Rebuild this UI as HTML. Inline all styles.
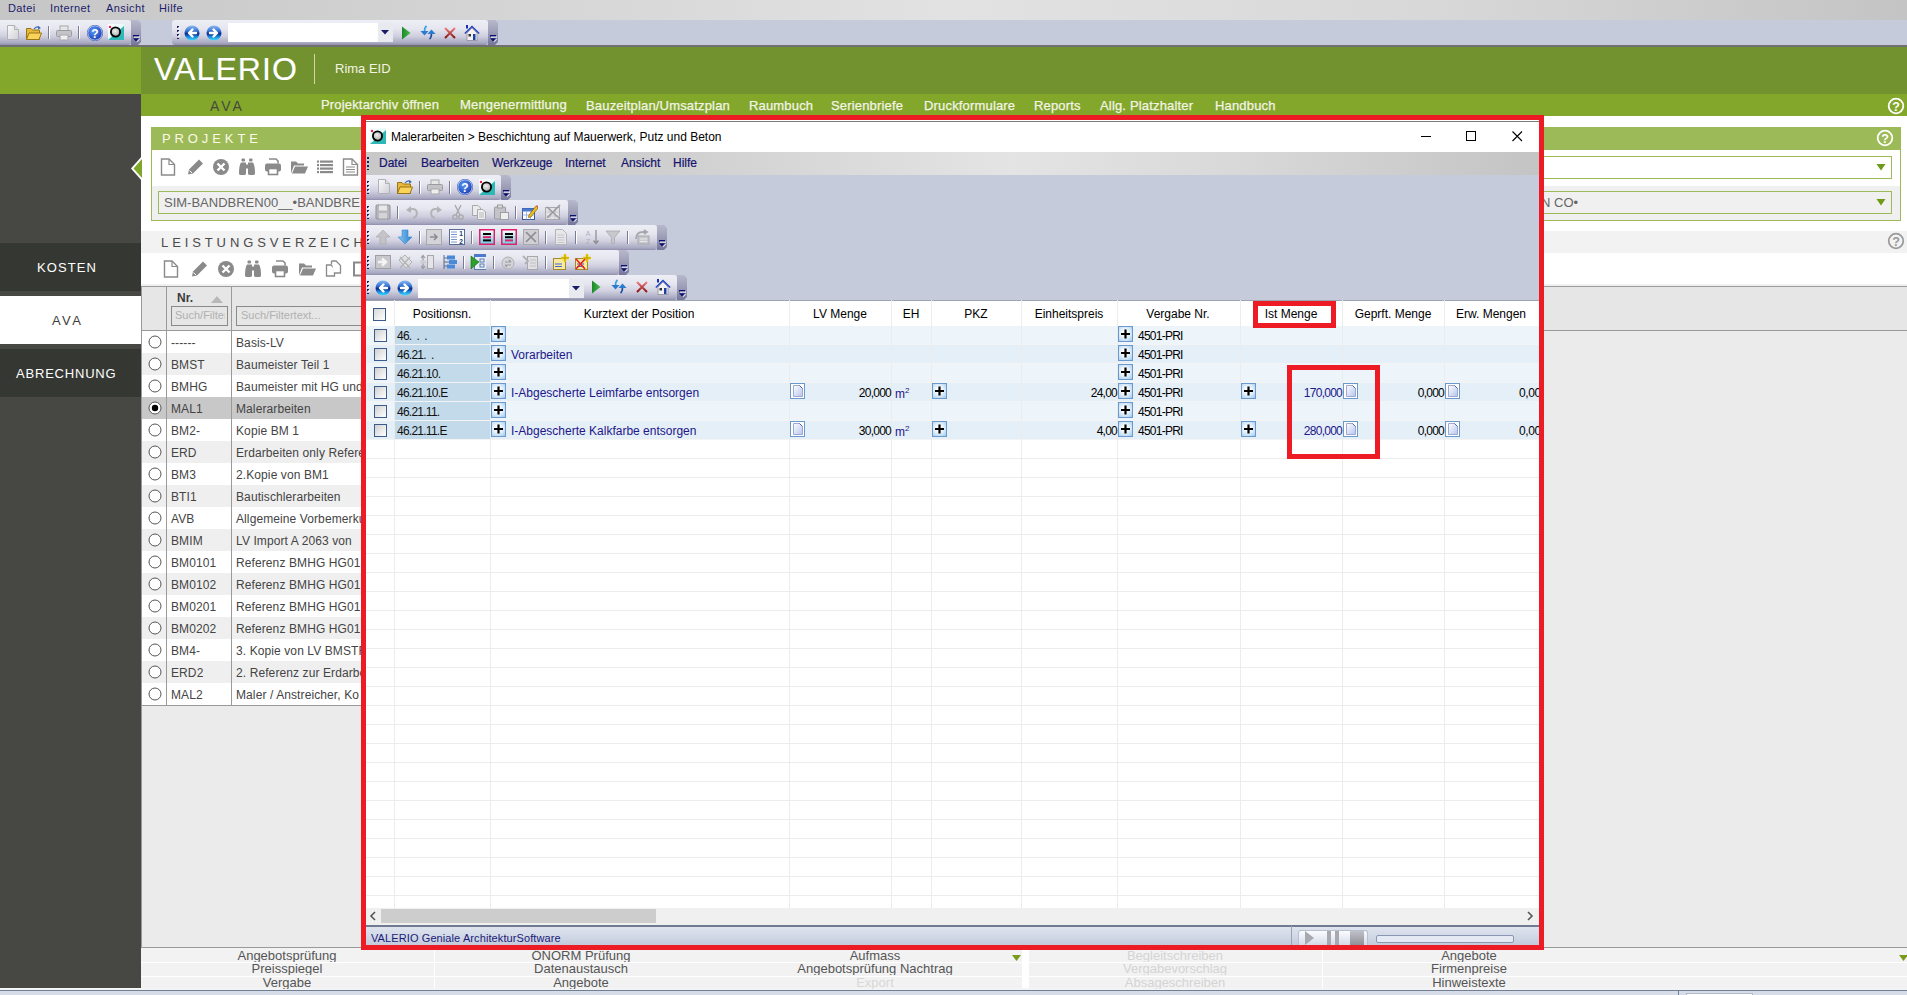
<!DOCTYPE html><html><head><meta charset="utf-8"><style>
html,body{margin:0;padding:0}
body{width:1907px;height:995px;overflow:hidden;position:relative;background:#e9e9e9;font-family:"Liberation Sans",sans-serif;}
.t{position:absolute;white-space:nowrap;line-height:1;}
div{box-sizing:border-box}
</style></head><body>
<div style="position:absolute;left:0px;top:0px;width:1907px;height:20px;background:linear-gradient(90deg,#c6c6c6 0%,#d4d4d4 25%,#e2e2e2 50%,#d8d8d8 75%,#c4c4c4 100%)"></div>
<div class="t" style="left:8px;top:3px;font-size:11px;color:#1c1c6c;letter-spacing:0.4px">Datei</div>
<div class="t" style="left:50px;top:3px;font-size:11px;color:#1c1c6c;letter-spacing:0.4px">Internet</div>
<div class="t" style="left:106px;top:3px;font-size:11px;color:#1c1c6c;letter-spacing:0.4px">Ansicht</div>
<div class="t" style="left:159px;top:3px;font-size:11px;color:#1c1c6c;letter-spacing:0.4px">Hilfe</div>
<div style="position:absolute;left:0px;top:20px;width:1907px;height:25px;background:#c5cbdb"></div>
<div style="position:absolute;left:0px;top:45px;width:1907px;height:2px;background:#707070"></div>
<div style="position:absolute;left:0px;top:20px;width:131px;height:25px;background:linear-gradient(#eeeef6 0%,#e6e6f0 35%,#cfcfdf 65%,#a8a8c2 92%,#8e8eac 100%);border-radius:0px 3px 3px 0px"></div>
<div style="position:absolute;left:131px;top:20px;width:10px;height:25px;background:linear-gradient(#b8b8cc,#9c9cb6 50%,#76769a);clip-path:polygon(0 0,70% 0,100% 12%,100% 88%,70% 100%,0 100%)"></div>
<svg style="position:absolute;left:132px;top:35px;" width="8" height="8" viewBox="0 0 8 8"><rect x="1" y="0" width="6" height="1.6" fill="#0a1070"/><rect x="2" y="1.6" width="6" height="1" fill="#fff"/><path d="M1 3.2 L7 3.2 L4 6.5 Z" fill="#0a1070"/><path d="M5 6.8 L7.5 4.2" stroke="#fff" stroke-width="1"/></svg>
<div style="position:absolute;left:172px;top:20px;width:316px;height:25px;background:linear-gradient(#eeeef6 0%,#e6e6f0 35%,#cfcfdf 65%,#a8a8c2 92%,#8e8eac 100%);border-radius:3px 3px 3px 3px"></div>
<div style="position:absolute;left:488px;top:20px;width:10px;height:25px;background:linear-gradient(#b8b8cc,#9c9cb6 50%,#76769a);clip-path:polygon(0 0,70% 0,100% 12%,100% 88%,70% 100%,0 100%)"></div>
<svg style="position:absolute;left:489px;top:35px;" width="8" height="8" viewBox="0 0 8 8"><rect x="1" y="0" width="6" height="1.6" fill="#0a1070"/><rect x="2" y="1.6" width="6" height="1" fill="#fff"/><path d="M1 3.2 L7 3.2 L4 6.5 Z" fill="#0a1070"/><path d="M5 6.8 L7.5 4.2" stroke="#fff" stroke-width="1"/></svg>
<svg style="position:absolute;left:176px;top:26px;" width="4" height="13" viewBox="0 0 4 13"><rect x="1" y="0" width="2" height="2" fill="#1a2060"/><rect x="2" y="1" width="2" height="2" fill="#fff" opacity="0.7"/><rect x="1" y="4" width="2" height="2" fill="#1a2060"/><rect x="2" y="5" width="2" height="2" fill="#fff" opacity="0.7"/><rect x="1" y="8" width="2" height="2" fill="#1a2060"/><rect x="2" y="9" width="2" height="2" fill="#fff" opacity="0.7"/><rect x="1" y="12" width="2" height="2" fill="#1a2060"/><rect x="2" y="13" width="2" height="2" fill="#fff" opacity="0.7"/></svg>
<svg style="position:absolute;left:5px;top:25px" width="16" height="16" viewBox="0 0 16 16"><defs><linearGradient id="gd" x1="0" y1="0" x2="1" y2="1"><stop offset="0" stop-color="#fbfbfb"/><stop offset="1" stop-color="#cfcfd6"/></linearGradient></defs><path d="M2.5 0.5 H9.5 L13.5 4.5 V14.5 H2.5 Z" fill="url(#gd)" stroke="#b0b0b8"/><path d="M9.5 0.5 V4.5 H13.5" fill="#e0e0e0" stroke="#b0b0b8"/></svg>
<svg style="position:absolute;left:26px;top:25px" width="16" height="16" viewBox="0 0 16 16"><path d="M0.5 3.5 H5 L6.5 5 H13.5 V14.5 H0.5Z" fill="#e8b838" stroke="#9a7418"/><path d="M0.5 14.5 L3 8 H15.5 L13 14.5Z" fill="#fad45a" stroke="#9a7418"/><path d="M8 4 Q10.5 0.5 13.5 2.5" fill="none" stroke="#3a6ab0" stroke-width="1.2"/><path d="M12 1 L15 3 L12 4.5Z" fill="#3a6ab0"/></svg>
<div style="position:absolute;left:48px;top:26px;width:1px;height:13px;background:#7a7a90"></div>
<div style="position:absolute;left:49px;top:26px;width:1px;height:13px;background:#fff"></div>
<svg style="position:absolute;left:56px;top:25px" width="16" height="16" viewBox="0 0 16 16"><rect x="4" y="1" width="8" height="5" fill="#e6e6e6" stroke="#a8a8a8"/><rect x="0.5" y="5.5" width="15" height="6" rx="1" fill="#c4c4c8" stroke="#9a9aa0"/><rect x="4" y="10" width="8" height="5" fill="#eeeeee" stroke="#a8a8a8"/></svg>
<div style="position:absolute;left:78px;top:26px;width:1px;height:13px;background:#7a7a90"></div>
<div style="position:absolute;left:79px;top:26px;width:1px;height:13px;background:#fff"></div>
<svg style="position:absolute;left:87px;top:25px" width="16" height="16" viewBox="0 0 16 16"><defs><radialGradient id="gh" cx="0.4" cy="0.35" r="0.7"><stop offset="0" stop-color="#5a9af8"/><stop offset="1" stop-color="#1a3ab0"/></radialGradient></defs><circle cx="8" cy="8" r="7.3" fill="url(#gh)" stroke="#cfe0ff" stroke-width="1"/><circle cx="8" cy="8" r="7.8" fill="none" stroke="#2a4aa8" stroke-width="0.6"/><text x="8" y="12.6" font-size="12" font-weight="bold" text-anchor="middle" fill="#fff" font-family="Liberation Sans">?</text></svg>
<svg style="position:absolute;left:108px;top:24px" width="16" height="16" viewBox="0 0 16 16"><defs><linearGradient id="gapp" x1="0" y1="0" x2="1" y2="1"><stop offset="0" stop-color="#ffffff"/><stop offset="1" stop-color="#d0f4f4"/></linearGradient><radialGradient id="gring" cx="0.45" cy="0.4" r="0.6"><stop offset="0" stop-color="#f0f0f0"/><stop offset="1" stop-color="#a8a8a8"/></radialGradient></defs><rect x="0" y="0" width="16" height="16" fill="url(#gapp)"/><path d="M0 16 L16 2 V16Z" fill="#2eb8b8"/><circle cx="7.5" cy="8" r="4.6" fill="url(#gring)" stroke="#000" stroke-width="1.8"/><circle cx="2" cy="3" r="1.2" fill="#e8204a"/></svg>
<svg style="position:absolute;left:184px;top:25px" width="16" height="16" viewBox="0 0 16 16"><defs><linearGradient id="gb" x1="0" y1="0" x2="0" y2="1"><stop offset="0" stop-color="#8ab8f0"/><stop offset="0.35" stop-color="#3a78d8"/><stop offset="0.55" stop-color="#0a2a8a"/><stop offset="0.75" stop-color="#1a8ae0"/><stop offset="1" stop-color="#40e0ff"/></linearGradient></defs><circle cx="8" cy="8" r="7.5" fill="url(#gb)"/><path d="M12 8 H5.5 M8.5 4.5 L5 8 L8.5 11.5" fill="none" stroke="#fff" stroke-width="2.4" stroke-linecap="round" stroke-linejoin="round"/></svg>
<svg style="position:absolute;left:206px;top:25px" width="16" height="16" viewBox="0 0 16 16"><defs><linearGradient id="gb" x1="0" y1="0" x2="0" y2="1"><stop offset="0" stop-color="#8ab8f0"/><stop offset="0.35" stop-color="#3a78d8"/><stop offset="0.55" stop-color="#0a2a8a"/><stop offset="0.75" stop-color="#1a8ae0"/><stop offset="1" stop-color="#40e0ff"/></linearGradient></defs><circle cx="8" cy="8" r="7.5" fill="url(#gb)"/><path d="M4 8 H10.5 M7.5 4.5 L11 8 L7.5 11.5" fill="none" stroke="#fff" stroke-width="2.4" stroke-linecap="round" stroke-linejoin="round"/></svg>
<div style="position:absolute;left:228px;top:23px;width:165px;height:19px;background:#fff"></div>
<div style="position:absolute;left:378px;top:23px;width:15px;height:19px;background:#e8eaf0"></div>
<svg style="position:absolute;left:381px;top:30px;" width="8" height="5" viewBox="0 0 8 5"><path d="M0 0 H8 L4 4.5Z" fill="#1a1a6a"/></svg>
<svg style="position:absolute;left:398px;top:25px" width="16" height="16" viewBox="0 0 16 16"><defs><linearGradient id="gpl" x1="0" y1="0" x2="1" y2="0"><stop offset="0" stop-color="#1a8a2a"/><stop offset="1" stop-color="#4ab84a"/></linearGradient></defs><path d="M4 1.5 L12.5 8 L4 14.5Z" fill="url(#gpl)"/></svg>
<svg style="position:absolute;left:420px;top:25px" width="16" height="16" viewBox="0 0 16 16"><path d="M6.5 1 Q4.5 2.5 4.5 6.5" fill="none" stroke="#30a0e0" stroke-width="1.6"/><path d="M0.5 6 H8.5 L4.5 10.5Z" fill="#2a7ad0"/><path d="M11.5 8.5 Q11.5 12.5 9.5 14" fill="none" stroke="#1a4a9a" stroke-width="1.6"/><path d="M7.5 9 H15.5 L11.5 4.5Z" fill="#2a7ad0"/></svg>
<svg style="position:absolute;left:442px;top:25px" width="16" height="16" viewBox="0 0 16 16"><defs><linearGradient id="gx" x1="0" y1="0" x2="0" y2="1"><stop offset="0" stop-color="#f08080"/><stop offset="1" stop-color="#8a1010"/></linearGradient></defs><path d="M3 3 L13 13 M13 3 L3 13" stroke="url(#gx)" stroke-width="2"/></svg>
<svg style="position:absolute;left:464px;top:25px" width="16" height="16" viewBox="0 0 16 16"><path d="M3 8 V15.5 H13 V8 L8 3Z" fill="#f2f2f4" stroke="#8a8a98" stroke-width="0.8"/><path d="M0.8 8.5 L8 1.5 L15.2 8.5" fill="none" stroke="#2040c0" stroke-width="1.3"/><rect x="2" y="0" width="2" height="3.5" fill="#1a30b0"/><rect x="4.5" y="9" width="2.5" height="2.5" fill="#333"/><rect x="9" y="9" width="2.5" height="6" fill="#1a40a8"/></svg>
<div style="position:absolute;left:0px;top:47px;width:141px;height:47px;background:#83a72b"></div>
<div style="position:absolute;left:141px;top:47px;width:1766px;height:47px;background:#72922f"></div>
<div class="t" style="left:154px;top:53px;font-size:32px;color:#fff;letter-spacing:1.1px;-webkit-text-stroke:0.15px #fff">VALERIO</div>
<div style="position:absolute;left:314px;top:54px;width:1px;height:30px;background:#d8d3a8"></div>
<div class="t" style="left:335px;top:62px;font-size:13px;color:#f4f4e4">Rima EID</div>
<div style="position:absolute;left:0px;top:94px;width:141px;height:22px;background:#474843"></div>
<div style="position:absolute;left:141px;top:94px;width:1766px;height:22px;background:#83a72b"></div>
<div class="t" style="left:210px;top:99px;font-size:14px;color:#474a3a;letter-spacing:3.0px">AVA</div>
<div class="t" style="left:321px;top:98px;font-size:13px;color:#f2f4e6;letter-spacing:0.17px;-webkit-text-stroke:0.25px #f2f4e6">Projektarchiv öffnen</div>
<div class="t" style="left:460px;top:98px;font-size:13px;color:#f2f4e6;letter-spacing:0.17px;-webkit-text-stroke:0.25px #f2f4e6">Mengenermittlung</div>
<div class="t" style="left:586px;top:99px;font-size:13px;color:#f2f4e6;letter-spacing:0.17px;-webkit-text-stroke:0.25px #f2f4e6">Bauzeitplan/Umsatzplan</div>
<div class="t" style="left:749px;top:99px;font-size:13px;color:#f2f4e6;letter-spacing:0.17px;-webkit-text-stroke:0.25px #f2f4e6">Raumbuch</div>
<div class="t" style="left:831px;top:99px;font-size:13px;color:#f2f4e6;letter-spacing:0.17px;-webkit-text-stroke:0.25px #f2f4e6">Serienbriefe</div>
<div class="t" style="left:924px;top:99px;font-size:13px;color:#f2f4e6;letter-spacing:0.17px;-webkit-text-stroke:0.25px #f2f4e6">Druckformulare</div>
<div class="t" style="left:1034px;top:99px;font-size:13px;color:#f2f4e6;letter-spacing:0.17px;-webkit-text-stroke:0.25px #f2f4e6">Reports</div>
<div class="t" style="left:1100px;top:99px;font-size:13px;color:#f2f4e6;letter-spacing:0.17px;-webkit-text-stroke:0.25px #f2f4e6">Allg. Platzhalter</div>
<div class="t" style="left:1215px;top:99px;font-size:13px;color:#f2f4e6;letter-spacing:0.17px;-webkit-text-stroke:0.25px #f2f4e6">Handbuch</div>
<svg style="position:absolute;left:1887px;top:97px;" width="18" height="18" viewBox="0 0 18 18"><circle cx="9" cy="9" r="7.3" fill="none" stroke="#fff" stroke-width="1.8"/><text x="9" y="13.6" font-size="12.5" font-weight="bold" text-anchor="middle" fill="#fff" font-family="Liberation Sans">?</text></svg>
<div style="position:absolute;left:0px;top:116px;width:141px;height:872px;background:#474843"></div>
<div style="position:absolute;left:0px;top:243px;width:141px;height:48px;background:#343732"></div>
<div class="t" style="left:37px;top:261px;font-size:13px;color:#fff;letter-spacing:1.1px">KOSTEN</div>
<div style="position:absolute;left:0px;top:296px;width:141px;height:48px;background:#fff"></div>
<div class="t" style="left:52px;top:314px;font-size:13px;color:#3c3c3c;letter-spacing:2.4px">AVA</div>
<div style="position:absolute;left:0px;top:349px;width:141px;height:48px;background:#343732"></div>
<div class="t" style="left:16px;top:367px;font-size:13px;color:#fff;letter-spacing:0.8px">ABRECHNUNG</div>
<div style="position:absolute;left:141px;top:116px;width:1766px;height:832px;background:#fff"></div>
<div style="position:absolute;left:151px;top:127px;width:1750px;height:94px;border:1px solid #9dba58;background:#fff"></div>
<div style="position:absolute;left:151px;top:127px;width:1750px;height:23px;background:#9dba58"></div>
<div class="t" style="left:162px;top:132px;font-size:13px;color:#fbfbe6;letter-spacing:3.9px">PROJEKTE</div>
<div style="position:absolute;left:152px;top:186px;width:1748px;height:34px;background:#f0f0f0"></div>
<div style="position:absolute;left:158px;top:191px;width:1734px;height:23px;border:1px solid #9dba58;background:#f0f0f0"></div>
<div class="t" style="left:164px;top:196px;font-size:13px;color:#666;letter-spacing:0px">SIM-BANDBREN00__•BANDBREITE</div>
<div class="t" style="left:1541px;top:196px;font-size:13px;color:#666;letter-spacing:0px">N CO•</div>
<div style="position:absolute;left:370px;top:156px;width:1522px;height:23px;border:1px solid #9dba58;background:#fff"></div>
<svg style="position:absolute;left:1876px;top:164px;" width="10" height="7" viewBox="0 0 10 7"><path d="M0.5 0 L9.5 0 L5 6.5Z" fill="#6f9a1a"/></svg>
<svg style="position:absolute;left:1876px;top:199px;" width="10" height="7" viewBox="0 0 10 7"><path d="M0.5 0 L9.5 0 L5 6.5Z" fill="#6f9a1a"/></svg>
<svg style="position:absolute;left:1875px;top:128px;" width="20" height="20" viewBox="0 0 20 20"><circle cx="10" cy="10" r="7.3" fill="none" stroke="#fff" stroke-width="1.8"/><text x="10" y="14.6" font-size="12.5" font-weight="bold" text-anchor="middle" fill="#fff" font-family="Liberation Sans">?</text></svg>
<svg style="position:absolute;left:160px;top:157px" width="18" height="19" viewBox="0 0 18 18"><path d="M1.5 1.5 H9 L14.5 7 V17.5 H1.5Z" fill="#fff" stroke="#8a8a8a" stroke-width="1.4"/><path d="M9 1.5 V7 H14.5" fill="none" stroke="#8a8a8a" stroke-width="1.2"/></svg>
<svg style="position:absolute;left:186px;top:157px" width="18" height="19" viewBox="0 0 18 18"><path d="M2 17 L3 12 L13 2 L17 6 L7 16Z" fill="#8a8a8a"/><path d="M3.5 13 L6 15.5" stroke="#fff" stroke-width="1"/></svg>
<svg style="position:absolute;left:212px;top:157px" width="18" height="19" viewBox="0 0 18 18"><circle cx="9" cy="9.5" r="8" fill="#8a8a8a"/><path d="M5.5 6 L12.5 13 M12.5 6 L5.5 13" stroke="#fff" stroke-width="2.4"/></svg>
<svg style="position:absolute;left:238px;top:157px" width="18" height="19" viewBox="0 0 18 18"><rect x="3.5" y="1" width="3.5" height="3" rx="1" fill="#8a8a8a"/><rect x="11" y="1" width="3.5" height="3" rx="1" fill="#8a8a8a"/><path d="M1 16 Q1 8 3 5 H8 V16 Q8 17.5 6 17.5 H3 Q1 17.5 1 16Z M10 16 V5 H15 Q17 8 17 16 Q17 17.5 15 17.5 H12 Q10 17.5 10 16Z" fill="#8a8a8a"/><rect x="7.5" y="7" width="3" height="4" fill="#8a8a8a"/></svg>
<svg style="position:absolute;left:264px;top:157px" width="18" height="19" viewBox="0 0 18 18"><path d="M5 1.5 H12 L14 3.5 V6" fill="none" stroke="#8a8a8a" stroke-width="1.6"/><rect x="1" y="6" width="16" height="8" rx="2" fill="#8a8a8a"/><rect x="4.5" y="11" width="9" height="6" fill="#fff" stroke="#8a8a8a" stroke-width="1.6"/></svg>
<svg style="position:absolute;left:290px;top:157px" width="18" height="19" viewBox="0 0 18 18"><path d="M1 4 H6 L8 6 H14 V8 H4 L1 16Z" fill="#8a8a8a"/><path d="M2 16 L5 9 H18 L15 16Z" fill="#8a8a8a"/></svg>
<svg style="position:absolute;left:316px;top:157px" width="18" height="19" viewBox="0 0 18 18"><rect x="1" y="3.0" width="2" height="2.2" fill="#8a8a8a"/><rect x="4" y="3.0" width="13" height="2.2" fill="#8a8a8a"/><rect x="1" y="6.5" width="2" height="2.2" fill="#8a8a8a"/><rect x="4" y="6.5" width="13" height="2.2" fill="#8a8a8a"/><rect x="1" y="10.0" width="2" height="2.2" fill="#8a8a8a"/><rect x="4" y="10.0" width="13" height="2.2" fill="#8a8a8a"/><rect x="1" y="13.5" width="2" height="2.2" fill="#8a8a8a"/><rect x="4" y="13.5" width="13" height="2.2" fill="#8a8a8a"/></svg>
<svg style="position:absolute;left:342px;top:157px" width="18" height="19" viewBox="0 0 18 18"><path d="M1.5 1.5 H10 L15.5 7 V17.5 H1.5Z" fill="#fff" stroke="#8a8a8a" stroke-width="1.4"/><path d="M10 1.5 V7 H15.5" fill="none" stroke="#8a8a8a" stroke-width="1.2"/><path d="M4 9.5 H13 M4 12 H13 M4 14.5 H13" stroke="#8a8a8a" stroke-width="1.2"/></svg>
<svg style="position:absolute;left:163px;top:259px" width="18" height="19" viewBox="0 0 18 18"><path d="M1.5 1.5 H9 L14.5 7 V17.5 H1.5Z" fill="#fff" stroke="#8a8a8a" stroke-width="1.4"/><path d="M9 1.5 V7 H14.5" fill="none" stroke="#8a8a8a" stroke-width="1.2"/></svg>
<svg style="position:absolute;left:190px;top:259px" width="18" height="19" viewBox="0 0 18 18"><path d="M2 17 L3 12 L13 2 L17 6 L7 16Z" fill="#8a8a8a"/><path d="M3.5 13 L6 15.5" stroke="#fff" stroke-width="1"/></svg>
<svg style="position:absolute;left:217px;top:259px" width="18" height="19" viewBox="0 0 18 18"><circle cx="9" cy="9.5" r="8" fill="#8a8a8a"/><path d="M5.5 6 L12.5 13 M12.5 6 L5.5 13" stroke="#fff" stroke-width="2.4"/></svg>
<svg style="position:absolute;left:244px;top:259px" width="18" height="19" viewBox="0 0 18 18"><rect x="3.5" y="1" width="3.5" height="3" rx="1" fill="#8a8a8a"/><rect x="11" y="1" width="3.5" height="3" rx="1" fill="#8a8a8a"/><path d="M1 16 Q1 8 3 5 H8 V16 Q8 17.5 6 17.5 H3 Q1 17.5 1 16Z M10 16 V5 H15 Q17 8 17 16 Q17 17.5 15 17.5 H12 Q10 17.5 10 16Z" fill="#8a8a8a"/><rect x="7.5" y="7" width="3" height="4" fill="#8a8a8a"/></svg>
<svg style="position:absolute;left:271px;top:259px" width="18" height="19" viewBox="0 0 18 18"><path d="M5 1.5 H12 L14 3.5 V6" fill="none" stroke="#8a8a8a" stroke-width="1.6"/><rect x="1" y="6" width="16" height="8" rx="2" fill="#8a8a8a"/><rect x="4.5" y="11" width="9" height="6" fill="#fff" stroke="#8a8a8a" stroke-width="1.6"/></svg>
<svg style="position:absolute;left:298px;top:259px" width="18" height="19" viewBox="0 0 18 18"><path d="M1 4 H6 L8 6 H14 V8 H4 L1 16Z" fill="#8a8a8a"/><path d="M2 16 L5 9 H18 L15 16Z" fill="#8a8a8a"/></svg>
<svg style="position:absolute;left:325px;top:259px" width="18" height="19" viewBox="0 0 18 18"><path d="M1.5 5.5 H6 L9.5 9 V16.5 H1.5Z" fill="#fff" stroke="#8a8a8a" stroke-width="1.3"/><path d="M6.5 1.5 H11 L15.5 6 V13.5 H9" fill="#fff" stroke="#8a8a8a" stroke-width="1.3"/><path d="M6.5 1.5 V5" stroke="#8a8a8a" stroke-width="1.3"/></svg>
<svg style="position:absolute;left:352px;top:259px" width="18" height="19" viewBox="0 0 18 18"><rect x="1" y="2" width="14" height="15" fill="#8a8a8a"/><rect x="3" y="4" width="10" height="11" fill="#fff"/></svg>
<svg style="position:absolute;left:131px;top:156px;" width="11" height="25" viewBox="0 0 11 25"><path d="M11 0 L0 12.5 L11 25 Z" fill="#fff"/><path d="M11 3 L2.5 12.5 L11 22 Z" fill="#7fa52a"/></svg>
<div style="position:absolute;left:141px;top:231px;width:1766px;height:22px;background:#f2f2f2"></div>
<div class="t" style="left:161px;top:236px;font-size:13px;color:#4a4a4a;letter-spacing:3.9px">LEISTUNGSVERZEICHNIS</div>
<svg style="position:absolute;left:1887px;top:232px;" width="18" height="18" viewBox="0 0 18 18"><circle cx="9" cy="9" r="7.3" fill="none" stroke="#999" stroke-width="1.7"/><text x="9" y="13.6" font-size="12.5" font-weight="bold" text-anchor="middle" fill="#999" font-family="Liberation Sans">?</text></svg>
<div style="position:absolute;left:141px;top:284px;width:1766px;height:2px;background:#f0f0f0"></div>
<div style="position:absolute;left:141px;top:286px;width:1766px;height:662px;background:#ebebeb;border-top:1px solid #9a9a9a;border-bottom:1px solid #9a9a9a"></div>
<div style="position:absolute;left:141px;top:287px;width:1766px;height:44px;background:#e6e6e6;border-bottom:1px solid #9a9a9a"></div>
<div style="position:absolute;left:141px;top:287px;width:1px;height:660px;background:#9a9a9a"></div>
<div class="t" style="left:177px;top:292px;font-size:12px;font-weight:bold;color:#3c3c3c">Nr.</div>
<svg style="position:absolute;left:211px;top:296px;" width="12" height="7" viewBox="0 0 12 7"><path d="M0 7 L6 0 L12 7Z" fill="#b8b8b8"/></svg>
<div style="position:absolute;left:171px;top:306px;width:57px;height:20px;border:1px solid #8a8a8a;background:#e6e6e6"></div>
<div class="t" style="left:175px;top:310px;font-size:11px;color:#b0b0b0;width:50px;overflow:hidden">Such/Filter</div>
<div style="position:absolute;left:236px;top:306px;width:200px;height:20px;border:1px solid #8a8a8a;background:#e6e6e6"></div>
<div class="t" style="left:241px;top:310px;font-size:11px;color:#b0b0b0">Such/Filtertext...</div>
<div style="position:absolute;left:166px;top:287px;width:1px;height:44px;background:#9a9a9a"></div>
<div style="position:absolute;left:231px;top:287px;width:1px;height:44px;background:#9a9a9a"></div>
<div style="position:absolute;left:142px;top:331px;width:400px;height:22px;background:#fff"></div>
<div style="position:absolute;left:166px;top:331px;width:1px;height:22px;background:#9a9a9a"></div>
<div style="position:absolute;left:231px;top:331px;width:1px;height:22px;background:#9a9a9a"></div>
<svg style="position:absolute;left:148px;top:335px;" width="14" height="14" viewBox="0 0 14 14"><circle cx="7" cy="7" r="6" fill="#fff" stroke="#555" stroke-width="1"/></svg>
<div class="t" style="left:171px;top:337px;font-size:12px;color:#444;letter-spacing:0.1px">------</div>
<div class="t" style="left:236px;top:337px;font-size:12px;color:#444;letter-spacing:0.1px">Basis-LV</div>
<div style="position:absolute;left:142px;top:353px;width:400px;height:22px;background:#efefef"></div>
<div style="position:absolute;left:166px;top:353px;width:1px;height:22px;background:#9a9a9a"></div>
<div style="position:absolute;left:231px;top:353px;width:1px;height:22px;background:#9a9a9a"></div>
<svg style="position:absolute;left:148px;top:357px;" width="14" height="14" viewBox="0 0 14 14"><circle cx="7" cy="7" r="6" fill="#fff" stroke="#555" stroke-width="1"/></svg>
<div class="t" style="left:171px;top:359px;font-size:12px;color:#444;letter-spacing:0.1px">BMST</div>
<div class="t" style="left:236px;top:359px;font-size:12px;color:#444;letter-spacing:0.1px">Baumeister Teil 1</div>
<div style="position:absolute;left:142px;top:375px;width:400px;height:22px;background:#fff"></div>
<div style="position:absolute;left:166px;top:375px;width:1px;height:22px;background:#9a9a9a"></div>
<div style="position:absolute;left:231px;top:375px;width:1px;height:22px;background:#9a9a9a"></div>
<svg style="position:absolute;left:148px;top:379px;" width="14" height="14" viewBox="0 0 14 14"><circle cx="7" cy="7" r="6" fill="#fff" stroke="#555" stroke-width="1"/></svg>
<div class="t" style="left:171px;top:381px;font-size:12px;color:#444;letter-spacing:0.1px">BMHG</div>
<div class="t" style="left:236px;top:381px;font-size:12px;color:#444;letter-spacing:0.1px">Baumeister mit HG und</div>
<div style="position:absolute;left:142px;top:397px;width:400px;height:22px;background:#c8c8c8"></div>
<div style="position:absolute;left:166px;top:397px;width:1px;height:22px;background:#9a9a9a"></div>
<div style="position:absolute;left:231px;top:397px;width:1px;height:22px;background:#9a9a9a"></div>
<svg style="position:absolute;left:148px;top:401px;" width="14" height="14" viewBox="0 0 14 14"><circle cx="7" cy="7" r="6" fill="#fff" stroke="#555" stroke-width="1"/><circle cx="7" cy="7" r="3.2" fill="#000"/></svg>
<div class="t" style="left:171px;top:403px;font-size:12px;color:#444;letter-spacing:0.1px">MAL1</div>
<div class="t" style="left:236px;top:403px;font-size:12px;color:#444;letter-spacing:0.1px">Malerarbeiten</div>
<div style="position:absolute;left:142px;top:419px;width:400px;height:22px;background:#fff"></div>
<div style="position:absolute;left:166px;top:419px;width:1px;height:22px;background:#9a9a9a"></div>
<div style="position:absolute;left:231px;top:419px;width:1px;height:22px;background:#9a9a9a"></div>
<svg style="position:absolute;left:148px;top:423px;" width="14" height="14" viewBox="0 0 14 14"><circle cx="7" cy="7" r="6" fill="#fff" stroke="#555" stroke-width="1"/></svg>
<div class="t" style="left:171px;top:425px;font-size:12px;color:#444;letter-spacing:0.1px">BM2-</div>
<div class="t" style="left:236px;top:425px;font-size:12px;color:#444;letter-spacing:0.1px">Kopie BM 1</div>
<div style="position:absolute;left:142px;top:441px;width:400px;height:22px;background:#efefef"></div>
<div style="position:absolute;left:166px;top:441px;width:1px;height:22px;background:#9a9a9a"></div>
<div style="position:absolute;left:231px;top:441px;width:1px;height:22px;background:#9a9a9a"></div>
<svg style="position:absolute;left:148px;top:445px;" width="14" height="14" viewBox="0 0 14 14"><circle cx="7" cy="7" r="6" fill="#fff" stroke="#555" stroke-width="1"/></svg>
<div class="t" style="left:171px;top:447px;font-size:12px;color:#444;letter-spacing:0.1px">ERD</div>
<div class="t" style="left:236px;top:447px;font-size:12px;color:#444;letter-spacing:0.1px">Erdarbeiten only Reference</div>
<div style="position:absolute;left:142px;top:463px;width:400px;height:22px;background:#fff"></div>
<div style="position:absolute;left:166px;top:463px;width:1px;height:22px;background:#9a9a9a"></div>
<div style="position:absolute;left:231px;top:463px;width:1px;height:22px;background:#9a9a9a"></div>
<svg style="position:absolute;left:148px;top:467px;" width="14" height="14" viewBox="0 0 14 14"><circle cx="7" cy="7" r="6" fill="#fff" stroke="#555" stroke-width="1"/></svg>
<div class="t" style="left:171px;top:469px;font-size:12px;color:#444;letter-spacing:0.1px">BM3</div>
<div class="t" style="left:236px;top:469px;font-size:12px;color:#444;letter-spacing:0.1px">2.Kopie von BM1</div>
<div style="position:absolute;left:142px;top:485px;width:400px;height:22px;background:#efefef"></div>
<div style="position:absolute;left:166px;top:485px;width:1px;height:22px;background:#9a9a9a"></div>
<div style="position:absolute;left:231px;top:485px;width:1px;height:22px;background:#9a9a9a"></div>
<svg style="position:absolute;left:148px;top:489px;" width="14" height="14" viewBox="0 0 14 14"><circle cx="7" cy="7" r="6" fill="#fff" stroke="#555" stroke-width="1"/></svg>
<div class="t" style="left:171px;top:491px;font-size:12px;color:#444;letter-spacing:0.1px">BTI1</div>
<div class="t" style="left:236px;top:491px;font-size:12px;color:#444;letter-spacing:0.1px">Bautischlerarbeiten</div>
<div style="position:absolute;left:142px;top:507px;width:400px;height:22px;background:#fff"></div>
<div style="position:absolute;left:166px;top:507px;width:1px;height:22px;background:#9a9a9a"></div>
<div style="position:absolute;left:231px;top:507px;width:1px;height:22px;background:#9a9a9a"></div>
<svg style="position:absolute;left:148px;top:511px;" width="14" height="14" viewBox="0 0 14 14"><circle cx="7" cy="7" r="6" fill="#fff" stroke="#555" stroke-width="1"/></svg>
<div class="t" style="left:171px;top:513px;font-size:12px;color:#444;letter-spacing:0.1px">AVB</div>
<div class="t" style="left:236px;top:513px;font-size:12px;color:#444;letter-spacing:0.1px">Allgemeine Vorbemerkungen</div>
<div style="position:absolute;left:142px;top:529px;width:400px;height:22px;background:#efefef"></div>
<div style="position:absolute;left:166px;top:529px;width:1px;height:22px;background:#9a9a9a"></div>
<div style="position:absolute;left:231px;top:529px;width:1px;height:22px;background:#9a9a9a"></div>
<svg style="position:absolute;left:148px;top:533px;" width="14" height="14" viewBox="0 0 14 14"><circle cx="7" cy="7" r="6" fill="#fff" stroke="#555" stroke-width="1"/></svg>
<div class="t" style="left:171px;top:535px;font-size:12px;color:#444;letter-spacing:0.1px">BMIM</div>
<div class="t" style="left:236px;top:535px;font-size:12px;color:#444;letter-spacing:0.1px">LV Import A 2063 von</div>
<div style="position:absolute;left:142px;top:551px;width:400px;height:22px;background:#fff"></div>
<div style="position:absolute;left:166px;top:551px;width:1px;height:22px;background:#9a9a9a"></div>
<div style="position:absolute;left:231px;top:551px;width:1px;height:22px;background:#9a9a9a"></div>
<svg style="position:absolute;left:148px;top:555px;" width="14" height="14" viewBox="0 0 14 14"><circle cx="7" cy="7" r="6" fill="#fff" stroke="#555" stroke-width="1"/></svg>
<div class="t" style="left:171px;top:557px;font-size:12px;color:#444;letter-spacing:0.1px">BM0101</div>
<div class="t" style="left:236px;top:557px;font-size:12px;color:#444;letter-spacing:0.1px">Referenz BMHG HG01</div>
<div style="position:absolute;left:142px;top:573px;width:400px;height:22px;background:#efefef"></div>
<div style="position:absolute;left:166px;top:573px;width:1px;height:22px;background:#9a9a9a"></div>
<div style="position:absolute;left:231px;top:573px;width:1px;height:22px;background:#9a9a9a"></div>
<svg style="position:absolute;left:148px;top:577px;" width="14" height="14" viewBox="0 0 14 14"><circle cx="7" cy="7" r="6" fill="#fff" stroke="#555" stroke-width="1"/></svg>
<div class="t" style="left:171px;top:579px;font-size:12px;color:#444;letter-spacing:0.1px">BM0102</div>
<div class="t" style="left:236px;top:579px;font-size:12px;color:#444;letter-spacing:0.1px">Referenz BMHG HG01</div>
<div style="position:absolute;left:142px;top:595px;width:400px;height:22px;background:#fff"></div>
<div style="position:absolute;left:166px;top:595px;width:1px;height:22px;background:#9a9a9a"></div>
<div style="position:absolute;left:231px;top:595px;width:1px;height:22px;background:#9a9a9a"></div>
<svg style="position:absolute;left:148px;top:599px;" width="14" height="14" viewBox="0 0 14 14"><circle cx="7" cy="7" r="6" fill="#fff" stroke="#555" stroke-width="1"/></svg>
<div class="t" style="left:171px;top:601px;font-size:12px;color:#444;letter-spacing:0.1px">BM0201</div>
<div class="t" style="left:236px;top:601px;font-size:12px;color:#444;letter-spacing:0.1px">Referenz BMHG HG01</div>
<div style="position:absolute;left:142px;top:617px;width:400px;height:22px;background:#efefef"></div>
<div style="position:absolute;left:166px;top:617px;width:1px;height:22px;background:#9a9a9a"></div>
<div style="position:absolute;left:231px;top:617px;width:1px;height:22px;background:#9a9a9a"></div>
<svg style="position:absolute;left:148px;top:621px;" width="14" height="14" viewBox="0 0 14 14"><circle cx="7" cy="7" r="6" fill="#fff" stroke="#555" stroke-width="1"/></svg>
<div class="t" style="left:171px;top:623px;font-size:12px;color:#444;letter-spacing:0.1px">BM0202</div>
<div class="t" style="left:236px;top:623px;font-size:12px;color:#444;letter-spacing:0.1px">Referenz BMHG HG01</div>
<div style="position:absolute;left:142px;top:639px;width:400px;height:22px;background:#fff"></div>
<div style="position:absolute;left:166px;top:639px;width:1px;height:22px;background:#9a9a9a"></div>
<div style="position:absolute;left:231px;top:639px;width:1px;height:22px;background:#9a9a9a"></div>
<svg style="position:absolute;left:148px;top:643px;" width="14" height="14" viewBox="0 0 14 14"><circle cx="7" cy="7" r="6" fill="#fff" stroke="#555" stroke-width="1"/></svg>
<div class="t" style="left:171px;top:645px;font-size:12px;color:#444;letter-spacing:0.1px">BM4-</div>
<div class="t" style="left:236px;top:645px;font-size:12px;color:#444;letter-spacing:0.1px">3. Kopie von LV BMSTR</div>
<div style="position:absolute;left:142px;top:661px;width:400px;height:22px;background:#efefef"></div>
<div style="position:absolute;left:166px;top:661px;width:1px;height:22px;background:#9a9a9a"></div>
<div style="position:absolute;left:231px;top:661px;width:1px;height:22px;background:#9a9a9a"></div>
<svg style="position:absolute;left:148px;top:665px;" width="14" height="14" viewBox="0 0 14 14"><circle cx="7" cy="7" r="6" fill="#fff" stroke="#555" stroke-width="1"/></svg>
<div class="t" style="left:171px;top:667px;font-size:12px;color:#444;letter-spacing:0.1px">ERD2</div>
<div class="t" style="left:236px;top:667px;font-size:12px;color:#444;letter-spacing:0.1px">2. Referenz zur Erdarbeiten</div>
<div style="position:absolute;left:142px;top:683px;width:400px;height:22px;background:#fff"></div>
<div style="position:absolute;left:166px;top:683px;width:1px;height:22px;background:#9a9a9a"></div>
<div style="position:absolute;left:231px;top:683px;width:1px;height:22px;background:#9a9a9a"></div>
<svg style="position:absolute;left:148px;top:687px;" width="14" height="14" viewBox="0 0 14 14"><circle cx="7" cy="7" r="6" fill="#fff" stroke="#555" stroke-width="1"/></svg>
<div class="t" style="left:171px;top:689px;font-size:12px;color:#444;letter-spacing:0.1px">MAL2</div>
<div class="t" style="left:236px;top:689px;font-size:12px;color:#444;letter-spacing:0.1px">Maler / Anstreicher, Ko</div>
<div style="position:absolute;left:142px;top:705px;width:400px;height:1px;background:#9a9a9a"></div>
<div style="position:absolute;left:141px;top:948px;width:1766px;height:41px;background:#f2f2f2"></div>
<div style="position:absolute;left:141px;top:962px;width:1766px;height:1px;background:#fff"></div>
<div style="position:absolute;left:141px;top:976px;width:1766px;height:1px;background:#fff"></div>
<div style="position:absolute;left:0px;top:988px;width:1907px;height:2px;background:#f4f4f4"></div>
<div style="position:absolute;left:0px;top:990px;width:1907px;height:1px;background:#6f7f96"></div>
<div style="position:absolute;left:0px;top:991px;width:1907px;height:4px;background:#d6dce8"></div>
<div style="position:absolute;left:1678px;top:991px;width:1px;height:4px;background:#6f7f96"></div>
<div style="position:absolute;left:1686px;top:993px;width:67px;height:2px;background:#fff;border:1px solid #b0b8c8;border-bottom:none"></div>
<div class="t" style="left:-13px;width:600px;text-align:center;top:949px;font-size:13px;color:#555;letter-spacing:0px;height:13px;overflow:hidden">Angebotsprüfung</div>
<div class="t" style="left:-13px;width:600px;text-align:center;top:962px;font-size:13px;color:#555;letter-spacing:0px;height:13px;overflow:hidden">Preisspiegel</div>
<div class="t" style="left:-13px;width:600px;text-align:center;top:976px;font-size:13px;color:#555;letter-spacing:0px;height:13px;overflow:hidden">Vergabe</div>
<div class="t" style="left:281px;width:600px;text-align:center;top:949px;font-size:13px;color:#555;letter-spacing:0px;height:13px;overflow:hidden">ÖNORM Prüfung</div>
<div class="t" style="left:281px;width:600px;text-align:center;top:962px;font-size:13px;color:#555;letter-spacing:0px;height:13px;overflow:hidden">Datenaustausch</div>
<div class="t" style="left:281px;width:600px;text-align:center;top:976px;font-size:13px;color:#555;letter-spacing:0px;height:13px;overflow:hidden">Angebote</div>
<div class="t" style="left:575px;width:600px;text-align:center;top:949px;font-size:13px;color:#555;letter-spacing:0px;height:13px;overflow:hidden">Aufmass</div>
<div class="t" style="left:575px;width:600px;text-align:center;top:962px;font-size:13px;color:#555;letter-spacing:0px;height:13px;overflow:hidden">Angebotsprüfung Nachtrag</div>
<div class="t" style="left:575px;width:600px;text-align:center;top:976px;font-size:13px;color:#d8d8d8;letter-spacing:0px;height:13px;overflow:hidden">Export</div>
<div class="t" style="left:875px;width:600px;text-align:center;top:949px;font-size:13px;color:#d4d4d4;letter-spacing:0px;height:13px;overflow:hidden">Begleitschreiben</div>
<div class="t" style="left:875px;width:600px;text-align:center;top:962px;font-size:13px;color:#d4d4d4;letter-spacing:0px;height:13px;overflow:hidden">Vergabevorschlag</div>
<div class="t" style="left:875px;width:600px;text-align:center;top:976px;font-size:13px;color:#d4d4d4;letter-spacing:0px;height:13px;overflow:hidden">Absageschreiben</div>
<div class="t" style="left:1169px;width:600px;text-align:center;top:949px;font-size:13px;color:#555;letter-spacing:0px;height:13px;overflow:hidden">Angebote</div>
<div class="t" style="left:1169px;width:600px;text-align:center;top:962px;font-size:13px;color:#555;letter-spacing:0px;height:13px;overflow:hidden">Firmenpreise</div>
<div class="t" style="left:1169px;width:600px;text-align:center;top:976px;font-size:13px;color:#555;letter-spacing:0px;height:13px;overflow:hidden">Hinweistexte</div>
<div style="position:absolute;left:434px;top:948px;width:1px;height:40px;background:#fff"></div>
<div style="position:absolute;left:1322px;top:948px;width:1px;height:40px;background:#fff"></div>
<div style="position:absolute;left:1022px;top:948px;width:7px;height:40px;background:#fff"></div>
<svg style="position:absolute;left:1012px;top:955px;" width="9" height="6" viewBox="0 0 9 6"><path d="M0 0 L9 0 L4.5 6Z" fill="#7a9a1a"/></svg>
<svg style="position:absolute;left:1899px;top:955px;" width="9" height="6" viewBox="0 0 9 6"><path d="M0 0 L9 0 L4.5 6Z" fill="#7a9a1a"/></svg>
<div style="position:absolute;left:366px;top:120px;width:1173px;height:825px;background:#fff"></div>
<div style="position:absolute;left:366px;top:121px;width:1173px;height:1px;background:#7a7a7a"></div>
<svg style="position:absolute;left:370px;top:128px" width="16" height="16" viewBox="0 0 16 16"><defs><linearGradient id="gapp" x1="0" y1="0" x2="1" y2="1"><stop offset="0" stop-color="#ffffff"/><stop offset="1" stop-color="#d0f4f4"/></linearGradient><radialGradient id="gring" cx="0.45" cy="0.4" r="0.6"><stop offset="0" stop-color="#f0f0f0"/><stop offset="1" stop-color="#a8a8a8"/></radialGradient></defs><rect x="0" y="0" width="16" height="16" fill="url(#gapp)"/><path d="M0 16 L16 2 V16Z" fill="#2eb8b8"/><circle cx="7.5" cy="8" r="4.6" fill="url(#gring)" stroke="#000" stroke-width="1.8"/><circle cx="2" cy="3" r="1.2" fill="#e8204a"/></svg>
<div class="t" style="left:391px;top:131px;font-size:12px;color:#000">Malerarbeiten &gt; Beschichtung auf Mauerwerk, Putz und Beton</div>
<div style="position:absolute;left:1421px;top:136px;width:10px;height:1px;background:#000"></div>
<div style="position:absolute;left:1466px;top:131px;width:10px;height:10px;border:1px solid #000"></div>
<svg style="position:absolute;left:1512px;top:131px;" width="11" height="11" viewBox="0 0 11 11"><path d="M0.5 0.5 L10 10 M10 0.5 L0.5 10" stroke="#000" stroke-width="1.1"/></svg>
<div style="position:absolute;left:366px;top:152px;width:1173px;height:23px;background:linear-gradient(90deg,#c8c8c8 0%,#cfcfcf 25%,#e4e4e4 55%,#d8d8d8 75%,#c4c4c4 100%)"></div>
<div class="t" style="left:379px;top:157px;font-size:12px;color:#14146e;-webkit-text-stroke:0.2px #14146e">Datei</div>
<div class="t" style="left:421px;top:157px;font-size:12px;color:#14146e;-webkit-text-stroke:0.2px #14146e">Bearbeiten</div>
<div class="t" style="left:492px;top:157px;font-size:12px;color:#14146e;-webkit-text-stroke:0.2px #14146e">Werkzeuge</div>
<div class="t" style="left:565px;top:157px;font-size:12px;color:#14146e;-webkit-text-stroke:0.2px #14146e">Internet</div>
<div class="t" style="left:621px;top:157px;font-size:12px;color:#14146e;-webkit-text-stroke:0.2px #14146e">Ansicht</div>
<div class="t" style="left:673px;top:157px;font-size:12px;color:#14146e;-webkit-text-stroke:0.2px #14146e">Hilfe</div>
<svg style="position:absolute;left:366px;top:157px;" width="4" height="13" viewBox="0 0 4 13"><rect x="1" y="0" width="2" height="2" fill="#1a2060"/><rect x="1" y="4" width="2" height="2" fill="#1a2060"/><rect x="1" y="8" width="2" height="2" fill="#1a2060"/><rect x="1" y="12" width="2" height="2" fill="#1a2060"/></svg>
<div style="position:absolute;left:366px;top:175px;width:1173px;height:125px;background:#c5cbdb"></div>
<div style="position:absolute;left:366px;top:175px;width:135px;height:25px;background:linear-gradient(#eeeef6 0%,#e6e6f0 35%,#cfcfdf 65%,#a8a8c2 92%,#8e8eac 100%);border-radius:0px 3px 3px 0px"></div>
<div style="position:absolute;left:501px;top:175px;width:10px;height:25px;background:linear-gradient(#b8b8cc,#9c9cb6 50%,#76769a);clip-path:polygon(0 0,70% 0,100% 12%,100% 88%,70% 100%,0 100%)"></div>
<svg style="position:absolute;left:502px;top:190px;" width="8" height="8" viewBox="0 0 8 8"><rect x="1" y="0" width="6" height="1.6" fill="#0a1070"/><rect x="2" y="1.6" width="6" height="1" fill="#fff"/><path d="M1 3.2 L7 3.2 L4 6.5 Z" fill="#0a1070"/><path d="M5 6.8 L7.5 4.2" stroke="#fff" stroke-width="1"/></svg>
<svg style="position:absolute;left:366px;top:181px;" width="4" height="13" viewBox="0 0 4 13"><rect x="1" y="0" width="2" height="2" fill="#1a2060"/><rect x="2" y="1" width="2" height="2" fill="#fff" opacity="0.7"/><rect x="1" y="4" width="2" height="2" fill="#1a2060"/><rect x="2" y="5" width="2" height="2" fill="#fff" opacity="0.7"/><rect x="1" y="8" width="2" height="2" fill="#1a2060"/><rect x="2" y="9" width="2" height="2" fill="#fff" opacity="0.7"/><rect x="1" y="12" width="2" height="2" fill="#1a2060"/><rect x="2" y="13" width="2" height="2" fill="#fff" opacity="0.7"/></svg>
<div style="position:absolute;left:366px;top:200px;width:202px;height:25px;background:linear-gradient(#eeeef6 0%,#e6e6f0 35%,#cfcfdf 65%,#a8a8c2 92%,#8e8eac 100%);border-radius:0px 3px 3px 0px"></div>
<div style="position:absolute;left:568px;top:200px;width:10px;height:25px;background:linear-gradient(#b8b8cc,#9c9cb6 50%,#76769a);clip-path:polygon(0 0,70% 0,100% 12%,100% 88%,70% 100%,0 100%)"></div>
<svg style="position:absolute;left:569px;top:215px;" width="8" height="8" viewBox="0 0 8 8"><rect x="1" y="0" width="6" height="1.6" fill="#0a1070"/><rect x="2" y="1.6" width="6" height="1" fill="#fff"/><path d="M1 3.2 L7 3.2 L4 6.5 Z" fill="#0a1070"/><path d="M5 6.8 L7.5 4.2" stroke="#fff" stroke-width="1"/></svg>
<svg style="position:absolute;left:366px;top:206px;" width="4" height="13" viewBox="0 0 4 13"><rect x="1" y="0" width="2" height="2" fill="#1a2060"/><rect x="2" y="1" width="2" height="2" fill="#fff" opacity="0.7"/><rect x="1" y="4" width="2" height="2" fill="#1a2060"/><rect x="2" y="5" width="2" height="2" fill="#fff" opacity="0.7"/><rect x="1" y="8" width="2" height="2" fill="#1a2060"/><rect x="2" y="9" width="2" height="2" fill="#fff" opacity="0.7"/><rect x="1" y="12" width="2" height="2" fill="#1a2060"/><rect x="2" y="13" width="2" height="2" fill="#fff" opacity="0.7"/></svg>
<div style="position:absolute;left:366px;top:225px;width:291px;height:25px;background:linear-gradient(#eeeef6 0%,#e6e6f0 35%,#cfcfdf 65%,#a8a8c2 92%,#8e8eac 100%);border-radius:0px 3px 3px 0px"></div>
<div style="position:absolute;left:657px;top:225px;width:10px;height:25px;background:linear-gradient(#b8b8cc,#9c9cb6 50%,#76769a);clip-path:polygon(0 0,70% 0,100% 12%,100% 88%,70% 100%,0 100%)"></div>
<svg style="position:absolute;left:658px;top:240px;" width="8" height="8" viewBox="0 0 8 8"><rect x="1" y="0" width="6" height="1.6" fill="#0a1070"/><rect x="2" y="1.6" width="6" height="1" fill="#fff"/><path d="M1 3.2 L7 3.2 L4 6.5 Z" fill="#0a1070"/><path d="M5 6.8 L7.5 4.2" stroke="#fff" stroke-width="1"/></svg>
<svg style="position:absolute;left:366px;top:231px;" width="4" height="13" viewBox="0 0 4 13"><rect x="1" y="0" width="2" height="2" fill="#1a2060"/><rect x="2" y="1" width="2" height="2" fill="#fff" opacity="0.7"/><rect x="1" y="4" width="2" height="2" fill="#1a2060"/><rect x="2" y="5" width="2" height="2" fill="#fff" opacity="0.7"/><rect x="1" y="8" width="2" height="2" fill="#1a2060"/><rect x="2" y="9" width="2" height="2" fill="#fff" opacity="0.7"/><rect x="1" y="12" width="2" height="2" fill="#1a2060"/><rect x="2" y="13" width="2" height="2" fill="#fff" opacity="0.7"/></svg>
<div style="position:absolute;left:366px;top:250px;width:253px;height:25px;background:linear-gradient(#eeeef6 0%,#e6e6f0 35%,#cfcfdf 65%,#a8a8c2 92%,#8e8eac 100%);border-radius:0px 3px 3px 0px"></div>
<div style="position:absolute;left:619px;top:250px;width:10px;height:25px;background:linear-gradient(#b8b8cc,#9c9cb6 50%,#76769a);clip-path:polygon(0 0,70% 0,100% 12%,100% 88%,70% 100%,0 100%)"></div>
<svg style="position:absolute;left:620px;top:265px;" width="8" height="8" viewBox="0 0 8 8"><rect x="1" y="0" width="6" height="1.6" fill="#0a1070"/><rect x="2" y="1.6" width="6" height="1" fill="#fff"/><path d="M1 3.2 L7 3.2 L4 6.5 Z" fill="#0a1070"/><path d="M5 6.8 L7.5 4.2" stroke="#fff" stroke-width="1"/></svg>
<svg style="position:absolute;left:366px;top:256px;" width="4" height="13" viewBox="0 0 4 13"><rect x="1" y="0" width="2" height="2" fill="#1a2060"/><rect x="2" y="1" width="2" height="2" fill="#fff" opacity="0.7"/><rect x="1" y="4" width="2" height="2" fill="#1a2060"/><rect x="2" y="5" width="2" height="2" fill="#fff" opacity="0.7"/><rect x="1" y="8" width="2" height="2" fill="#1a2060"/><rect x="2" y="9" width="2" height="2" fill="#fff" opacity="0.7"/><rect x="1" y="12" width="2" height="2" fill="#1a2060"/><rect x="2" y="13" width="2" height="2" fill="#fff" opacity="0.7"/></svg>
<div style="position:absolute;left:366px;top:275px;width:311px;height:25px;background:linear-gradient(#eeeef6 0%,#e6e6f0 35%,#cfcfdf 65%,#a8a8c2 92%,#8e8eac 100%);border-radius:0px 3px 3px 0px"></div>
<div style="position:absolute;left:677px;top:275px;width:10px;height:25px;background:linear-gradient(#b8b8cc,#9c9cb6 50%,#76769a);clip-path:polygon(0 0,70% 0,100% 12%,100% 88%,70% 100%,0 100%)"></div>
<svg style="position:absolute;left:678px;top:290px;" width="8" height="8" viewBox="0 0 8 8"><rect x="1" y="0" width="6" height="1.6" fill="#0a1070"/><rect x="2" y="1.6" width="6" height="1" fill="#fff"/><path d="M1 3.2 L7 3.2 L4 6.5 Z" fill="#0a1070"/><path d="M5 6.8 L7.5 4.2" stroke="#fff" stroke-width="1"/></svg>
<svg style="position:absolute;left:366px;top:281px;" width="4" height="13" viewBox="0 0 4 13"><rect x="1" y="0" width="2" height="2" fill="#1a2060"/><rect x="2" y="1" width="2" height="2" fill="#fff" opacity="0.7"/><rect x="1" y="4" width="2" height="2" fill="#1a2060"/><rect x="2" y="5" width="2" height="2" fill="#fff" opacity="0.7"/><rect x="1" y="8" width="2" height="2" fill="#1a2060"/><rect x="2" y="9" width="2" height="2" fill="#fff" opacity="0.7"/><rect x="1" y="12" width="2" height="2" fill="#1a2060"/><rect x="2" y="13" width="2" height="2" fill="#fff" opacity="0.7"/></svg>
<svg style="position:absolute;left:376px;top:179px" width="16" height="16" viewBox="0 0 16 16"><defs><linearGradient id="gd" x1="0" y1="0" x2="1" y2="1"><stop offset="0" stop-color="#fbfbfb"/><stop offset="1" stop-color="#cfcfd6"/></linearGradient></defs><path d="M2.5 0.5 H9.5 L13.5 4.5 V14.5 H2.5 Z" fill="url(#gd)" stroke="#b0b0b8"/><path d="M9.5 0.5 V4.5 H13.5" fill="#e0e0e0" stroke="#b0b0b8"/></svg>
<svg style="position:absolute;left:397px;top:179px" width="16" height="16" viewBox="0 0 16 16"><path d="M0.5 3.5 H5 L6.5 5 H13.5 V14.5 H0.5Z" fill="#e8b838" stroke="#9a7418"/><path d="M0.5 14.5 L3 8 H15.5 L13 14.5Z" fill="#fad45a" stroke="#9a7418"/><path d="M8 4 Q10.5 0.5 13.5 2.5" fill="none" stroke="#3a6ab0" stroke-width="1.2"/><path d="M12 1 L15 3 L12 4.5Z" fill="#3a6ab0"/></svg>
<div style="position:absolute;left:419px;top:181px;width:1px;height:13px;background:#7a7a90"></div>
<div style="position:absolute;left:420px;top:181px;width:1px;height:13px;background:#fff"></div>
<svg style="position:absolute;left:427px;top:179px" width="16" height="16" viewBox="0 0 16 16"><rect x="4" y="1" width="8" height="5" fill="#e6e6e6" stroke="#a8a8a8"/><rect x="0.5" y="5.5" width="15" height="6" rx="1" fill="#c4c4c8" stroke="#9a9aa0"/><rect x="4" y="10" width="8" height="5" fill="#eeeeee" stroke="#a8a8a8"/></svg>
<div style="position:absolute;left:449px;top:181px;width:1px;height:13px;background:#7a7a90"></div>
<div style="position:absolute;left:450px;top:181px;width:1px;height:13px;background:#fff"></div>
<svg style="position:absolute;left:457px;top:179px" width="16" height="16" viewBox="0 0 16 16"><defs><radialGradient id="gh" cx="0.4" cy="0.35" r="0.7"><stop offset="0" stop-color="#5a9af8"/><stop offset="1" stop-color="#1a3ab0"/></radialGradient></defs><circle cx="8" cy="8" r="7.3" fill="url(#gh)" stroke="#cfe0ff" stroke-width="1"/><circle cx="8" cy="8" r="7.8" fill="none" stroke="#2a4aa8" stroke-width="0.6"/><text x="8" y="12.6" font-size="12" font-weight="bold" text-anchor="middle" fill="#fff" font-family="Liberation Sans">?</text></svg>
<svg style="position:absolute;left:479px;top:179px" width="16" height="16" viewBox="0 0 16 16"><defs><linearGradient id="gapp" x1="0" y1="0" x2="1" y2="1"><stop offset="0" stop-color="#ffffff"/><stop offset="1" stop-color="#d0f4f4"/></linearGradient><radialGradient id="gring" cx="0.45" cy="0.4" r="0.6"><stop offset="0" stop-color="#f0f0f0"/><stop offset="1" stop-color="#a8a8a8"/></radialGradient></defs><rect x="0" y="0" width="16" height="16" fill="url(#gapp)"/><path d="M0 16 L16 2 V16Z" fill="#2eb8b8"/><circle cx="7.5" cy="8" r="4.6" fill="url(#gring)" stroke="#000" stroke-width="1.8"/><circle cx="2" cy="3" r="1.2" fill="#e8204a"/></svg>
<svg style="position:absolute;left:375px;top:204px" width="16" height="16" viewBox="0 0 16 16"><rect x="1" y="1" width="14" height="14" rx="1" fill="#b8b8bc" stroke="#909098"/><rect x="4" y="1.5" width="8" height="5" fill="#e8e8ea"/><rect x="4" y="9" width="8" height="5.5" fill="#d4d4d8"/></svg>
<div style="position:absolute;left:397px;top:206px;width:1px;height:13px;background:#7a7a90"></div>
<div style="position:absolute;left:398px;top:206px;width:1px;height:13px;background:#fff"></div>
<svg style="position:absolute;left:405px;top:204px" width="16" height="16" viewBox="0 0 16 16"><g ><path d="M4 6 Q11 3 12 9 Q12 13 8 14" fill="none" stroke="#b4b4b8" stroke-width="2"/><path d="M1 6 L6 2 L6 9Z" fill="#b4b4b8"/></g></svg>
<svg style="position:absolute;left:427px;top:204px" width="16" height="16" viewBox="0 0 16 16"><g transform="translate(16,0) scale(-1,1)"><path d="M4 6 Q11 3 12 9 Q12 13 8 14" fill="none" stroke="#b4b4b8" stroke-width="2"/><path d="M1 6 L6 2 L6 9Z" fill="#b4b4b8"/></g></svg>
<svg style="position:absolute;left:450px;top:204px" width="16" height="16" viewBox="0 0 16 16"><path d="M5 1 L10 11 M11 1 L6 11" stroke="#a8a8ac" stroke-width="1.4"/><circle cx="5" cy="13" r="2.2" fill="none" stroke="#a8a8ac" stroke-width="1.3"/><circle cx="11" cy="13" r="2.2" fill="none" stroke="#a8a8ac" stroke-width="1.3"/></svg>
<svg style="position:absolute;left:471px;top:204px" width="16" height="16" viewBox="0 0 16 16"><path d="M1.5 1.5 H7 L9.5 4 V11.5 H1.5Z" fill="#ececec" stroke="#a8a8ac"/><path d="M6.5 5.5 H12 L14.5 8 V15.5 H6.5Z" fill="#f0f0f0" stroke="#a8a8ac"/><path d="M8 9 H13 M8 11 H13 M8 13 H13" stroke="#b8b8bc"/></svg>
<svg style="position:absolute;left:493px;top:204px" width="16" height="16" viewBox="0 0 16 16"><rect x="1.5" y="3" width="11" height="12" rx="1" fill="#c4c4c8" stroke="#9a9aa0"/><rect x="4.5" y="1" width="5" height="3" fill="#dcdcdc" stroke="#9a9aa0"/><rect x="7.5" y="8.5" width="8" height="7" fill="#eeeeee" stroke="#a0a0a4"/></svg>
<div style="position:absolute;left:515px;top:206px;width:1px;height:13px;background:#7a7a90"></div>
<div style="position:absolute;left:516px;top:206px;width:1px;height:13px;background:#fff"></div>
<svg style="position:absolute;left:522px;top:204px" width="16" height="16" viewBox="0 0 16 16"><rect x="0.5" y="4.5" width="12" height="11" fill="#fff" stroke="#3a5aa0"/><rect x="0.5" y="4.5" width="12" height="3" fill="#4a7ad0"/><path d="M0.5 11 H12.5 M4.5 7.5 V15.5 M8.5 7.5 V15.5" stroke="#8aa8e0" stroke-width="0.8"/><path d="M7 11 L14 2 L16 4 L9 13 L6.5 13.5Z" fill="#f0c020" stroke="#806010" stroke-width="0.7"/><path d="M14 2 L15 1 L16.5 2.5 L16 4Z" fill="#e06040"/></svg>
<svg style="position:absolute;left:545px;top:204px" width="16" height="16" viewBox="0 0 16 16"><rect x="0.5" y="3.5" width="14" height="12" fill="#e4e4e8" stroke="#a8a8ac"/><path d="M0.5 8 H14.5 M0.5 12 H14.5 M5 3.5 V15.5 M10 3.5 V15.5" stroke="#c0c0c4" stroke-width="0.8"/><path d="M2 3 L15 15 M15 1 L2 14" stroke="#9a9aa0" stroke-width="1.6"/></svg>
<svg style="position:absolute;left:375px;top:229px" width="16" height="16" viewBox="0 0 16 16"><path d="M8 1 L15 8 H11 V15 H5 V8 H1Z" fill="#c4c4c8" stroke="#a4a4a8" stroke-width="0.6"/></svg>
<svg style="position:absolute;left:397px;top:229px" width="16" height="16" viewBox="0 0 16 16"><defs><linearGradient id="gdn" x1="0" y1="0" x2="1" y2="0"><stop offset="0" stop-color="#8ac8f0"/><stop offset="1" stop-color="#2a80d0"/></linearGradient></defs><path d="M8 15 L15 8 H11 V1 H5 V8 H1Z" fill="url(#gdn)" stroke="#3a8ad0" stroke-width="0.6"/></svg>
<div style="position:absolute;left:419px;top:231px;width:1px;height:13px;background:#7a7a90"></div>
<div style="position:absolute;left:420px;top:231px;width:1px;height:13px;background:#fff"></div>
<svg style="position:absolute;left:426px;top:229px" width="16" height="16" viewBox="0 0 16 16"><rect x="0.5" y="0.5" width="15" height="15" fill="#d4d4d8" stroke="#a8a8ac"/><path d="M4 8 H11 M8 5 L11 8 L8 11" fill="none" stroke="#8a8a90" stroke-width="1.5"/></svg>
<svg style="position:absolute;left:449px;top:229px" width="16" height="16" viewBox="0 0 16 16"><rect x="0.5" y="0.5" width="15" height="15" fill="#fff" stroke="#5a6a90"/><path d="M2 3 H8 M2 5.5 H8 M2 8 H8 M2 10.5 H8 M2 13 H8" stroke="#7a9ad0"/><text x="12" y="7" font-size="6.5" font-weight="bold" text-anchor="middle" fill="#203a80" font-family="Liberation Sans">1</text><text x="12" y="14.5" font-size="6.5" font-weight="bold" text-anchor="middle" fill="#203a80" font-family="Liberation Sans">2</text></svg>
<div style="position:absolute;left:471px;top:231px;width:1px;height:13px;background:#7a7a90"></div>
<div style="position:absolute;left:472px;top:231px;width:1px;height:13px;background:#fff"></div>
<svg style="position:absolute;left:479px;top:229px" width="16" height="16" viewBox="0 0 16 16"><defs><linearGradient id="gpk" x1="0" y1="0" x2="0" y2="1"><stop offset="0" stop-color="#fff"/><stop offset="1" stop-color="#6acce0"/></linearGradient></defs><rect x="0.75" y="0.75" width="14.5" height="14.5" fill="url(#gpk)" stroke="#e0206a" stroke-width="1.5"/><rect x="4" y="4" width="8" height="2" fill="#000"/><rect x="4" y="7.2" width="8" height="2" fill="#e0206a"/><rect x="4" y="10.4" width="8" height="2" fill="#000"/></svg>
<svg style="position:absolute;left:501px;top:229px" width="16" height="16" viewBox="0 0 16 16"><defs><linearGradient id="gpk" x1="0" y1="0" x2="0" y2="1"><stop offset="0" stop-color="#fff"/><stop offset="1" stop-color="#6acce0"/></linearGradient></defs><rect x="0.75" y="0.75" width="14.5" height="14.5" fill="url(#gpk)" stroke="#e0206a" stroke-width="1.5"/><rect x="4" y="4" width="8" height="2" fill="#000"/><rect x="4" y="7.2" width="8" height="2" fill="#000"/><rect x="4" y="10.4" width="8" height="2" fill="#e0206a"/></svg>
<svg style="position:absolute;left:523px;top:229px" width="16" height="16" viewBox="0 0 16 16"><rect x="0.5" y="0.5" width="15" height="15" fill="#d0d0d4" stroke="#a8a8ac"/><path d="M3 3 L13 13 M13 3 L3 13" stroke="#8a8a90" stroke-width="1.6"/></svg>
<div style="position:absolute;left:545px;top:231px;width:1px;height:13px;background:#7a7a90"></div>
<div style="position:absolute;left:546px;top:231px;width:1px;height:13px;background:#fff"></div>
<svg style="position:absolute;left:553px;top:229px" width="16" height="16" viewBox="0 0 16 16"><path d="M2.5 0.5 H9.5 L13.5 4.5 V15.5 H2.5Z" fill="#e8e8ea" stroke="#b4b4b8"/><path d="M4.5 6 H11.5 M4.5 8.5 H11.5 M4.5 11 H11.5 M4.5 13.5 H11.5" stroke="#c4c4c8"/></svg>
<div style="position:absolute;left:575px;top:231px;width:1px;height:13px;background:#7a7a90"></div>
<div style="position:absolute;left:576px;top:231px;width:1px;height:13px;background:#fff"></div>
<svg style="position:absolute;left:584px;top:229px" width="16" height="16" viewBox="0 0 16 16"><text x="4" y="7" font-size="7" text-anchor="middle" fill="#b0b0b4" font-family="Liberation Sans">A</text><text x="4" y="15" font-size="7" text-anchor="middle" fill="#b0b0b4" font-family="Liberation Sans">Z</text><path d="M12 1 V14 M9.5 11.5 L12 14.5 L14.5 11.5" fill="none" stroke="#8a8a90" stroke-width="1.2"/></svg>
<svg style="position:absolute;left:605px;top:229px" width="16" height="16" viewBox="0 0 16 16"><path d="M1 2 H15 L9.5 8.5 V14.5 H6.5 V8.5Z" fill="#c8c8cc" stroke="#a8a8ac" stroke-width="0.8"/></svg>
<div style="position:absolute;left:627px;top:231px;width:1px;height:13px;background:#7a7a90"></div>
<div style="position:absolute;left:628px;top:231px;width:1px;height:13px;background:#fff"></div>
<svg style="position:absolute;left:634px;top:229px" width="16" height="16" viewBox="0 0 16 16"><path d="M2 10 Q2 3 9 3 H12 M10 1 L13 3 L10 5" fill="none" stroke="#a8a8ac" stroke-width="1.8"/><rect x="4" y="7" width="11" height="8" fill="#c8c8cc" stroke="#a8a8ac"/><path d="M6 10 H13 M6 12.5 H13" stroke="#e8e8ea"/></svg>
<svg style="position:absolute;left:375px;top:254px" width="16" height="16" viewBox="0 0 16 16"><rect x="0.5" y="1.5" width="15" height="13" fill="#c8c8cc" stroke="#a0a0a4"/><path d="M3 8 H10 M7 4.5 L11 8 L7 11.5" fill="none" stroke="#f4f4f4" stroke-width="2.4"/></svg>
<svg style="position:absolute;left:397px;top:254px" width="16" height="16" viewBox="0 0 16 16"><path d="M2 6 L8 1 L15 8 L9 14Z" fill="#e0e0e4" stroke="#b0b0b4"/><path d="M3 3 L13 14 M13 3 L3 14" stroke="#b4b4b8" stroke-width="1.4"/></svg>
<svg style="position:absolute;left:419px;top:254px" width="16" height="16" viewBox="0 0 16 16"><rect x="8.5" y="1.5" width="6" height="13" fill="#e4e4e8" stroke="#a8a8ac"/><path d="M4 1 V15 M2 4 L4 1.5 L6 4 M2 12 L4 14.5 L6 12" fill="none" stroke="#9a9aa0" stroke-width="1.2"/><rect x="1" y="6.5" width="6" height="3" fill="#d0d0d4"/></svg>
<svg style="position:absolute;left:441px;top:254px" width="16" height="16" viewBox="0 0 16 16"><path d="M3 1 V15 M3 4 H6 M3 8 H8 M3 12 H6" stroke="#5a6a8a" stroke-width="1"/><rect x="6" y="1.5" width="8" height="4" fill="#4a8ad8"/><rect x="8" y="6" width="8" height="4" fill="#4a8ad8"/><rect x="6" y="10.5" width="8" height="4" fill="#4a8ad8"/></svg>
<div style="position:absolute;left:463px;top:256px;width:1px;height:13px;background:#7a7a90"></div>
<div style="position:absolute;left:464px;top:256px;width:1px;height:13px;background:#fff"></div>
<svg style="position:absolute;left:470px;top:254px" width="16" height="16" viewBox="0 0 16 16"><rect x="4.5" y="0.5" width="12" height="15" fill="#e8eef8" stroke="#5a7ab0"/><rect x="4.5" y="0.5" width="12" height="2.5" fill="#4a7ad0"/><rect x="10" y="5" width="4" height="3" fill="none" stroke="#5a7ab0"/><rect x="10" y="10" width="4" height="3" fill="none" stroke="#5a7ab0"/><path d="M1 2 L9 8 L1 15Z" fill="#2aa02a" stroke="#1a6a1a" stroke-width="0.6"/></svg>
<div style="position:absolute;left:493px;top:256px;width:1px;height:13px;background:#7a7a90"></div>
<div style="position:absolute;left:494px;top:256px;width:1px;height:13px;background:#fff"></div>
<svg style="position:absolute;left:500px;top:254px" width="16" height="16" viewBox="0 0 16 16"><circle cx="8" cy="9" r="6" fill="#d4d4d8" stroke="#b0b0b4"/><path d="M5 8 H11 M9 6 L11 8 M11 11 H5 M7 13 L5 11" fill="none" stroke="#9a9aa0" stroke-width="1.2"/></svg>
<svg style="position:absolute;left:522px;top:254px" width="16" height="16" viewBox="0 0 16 16"><rect x="5.5" y="2.5" width="10" height="13" fill="#e0e0e4" stroke="#a8a8ac"/><path d="M8 6 H14 M8 9 H14 M8 12 H14" stroke="#c0c0c4"/><path d="M1 2 L6 7 L3 10" fill="none" stroke="#b0b0b4" stroke-width="1.8"/></svg>
<div style="position:absolute;left:545px;top:256px;width:1px;height:13px;background:#7a7a90"></div>
<div style="position:absolute;left:546px;top:256px;width:1px;height:13px;background:#fff"></div>
<svg style="position:absolute;left:553px;top:254px" width="16" height="16" viewBox="0 0 16 16"><rect x="0.5" y="4.5" width="12" height="11" fill="#f8e8a0" stroke="#a08a30"/><path d="M2 10 H9 M2 12.5 H9" stroke="#3a6ad0" stroke-width="1.2"/><path d="M12 0 V8 M8 4 H16" stroke="#f0d000" stroke-width="2.6"/><path d="M12 0.5 V7.5 M8.5 4 H15.5" stroke="#a08a10" stroke-width="0.6"/></svg>
<svg style="position:absolute;left:575px;top:254px" width="16" height="16" viewBox="0 0 16 16"><rect x="0.5" y="4.5" width="12" height="11" fill="#f8e8a0" stroke="#a08a30"/><path d="M2 10 H9 M2 12.5 H9" stroke="#3a6ad0" stroke-width="1.2"/><path d="M12 0 V8 M8 4 H16" stroke="#f0d000" stroke-width="2.6"/><path d="M12 0.5 V7.5 M8.5 4 H15.5" stroke="#a08a10" stroke-width="0.6"/><path d="M1 5 L10 15 M10 5 L1 15" stroke="#e82020" stroke-width="1.6"/></svg>
<svg style="position:absolute;left:375px;top:280px" width="16" height="16" viewBox="0 0 16 16"><defs><linearGradient id="gb" x1="0" y1="0" x2="0" y2="1"><stop offset="0" stop-color="#8ab8f0"/><stop offset="0.35" stop-color="#3a78d8"/><stop offset="0.55" stop-color="#0a2a8a"/><stop offset="0.75" stop-color="#1a8ae0"/><stop offset="1" stop-color="#40e0ff"/></linearGradient></defs><circle cx="8" cy="8" r="7.5" fill="url(#gb)"/><path d="M12 8 H5.5 M8.5 4.5 L5 8 L8.5 11.5" fill="none" stroke="#fff" stroke-width="2.4" stroke-linecap="round" stroke-linejoin="round"/></svg>
<svg style="position:absolute;left:397px;top:280px" width="16" height="16" viewBox="0 0 16 16"><defs><linearGradient id="gb" x1="0" y1="0" x2="0" y2="1"><stop offset="0" stop-color="#8ab8f0"/><stop offset="0.35" stop-color="#3a78d8"/><stop offset="0.55" stop-color="#0a2a8a"/><stop offset="0.75" stop-color="#1a8ae0"/><stop offset="1" stop-color="#40e0ff"/></linearGradient></defs><circle cx="8" cy="8" r="7.5" fill="url(#gb)"/><path d="M4 8 H10.5 M7.5 4.5 L11 8 L7.5 11.5" fill="none" stroke="#fff" stroke-width="2.4" stroke-linecap="round" stroke-linejoin="round"/></svg>
<div style="position:absolute;left:418px;top:279px;width:166px;height:19px;background:#fff"></div>
<div style="position:absolute;left:569px;top:279px;width:15px;height:19px;background:#e8eaf0"></div>
<svg style="position:absolute;left:572px;top:286px;" width="8" height="5" viewBox="0 0 8 5"><path d="M0 0 H8 L4 4.5Z" fill="#1a1a6a"/></svg>
<svg style="position:absolute;left:588px;top:279px" width="16" height="16" viewBox="0 0 16 16"><defs><linearGradient id="gpl" x1="0" y1="0" x2="1" y2="0"><stop offset="0" stop-color="#1a8a2a"/><stop offset="1" stop-color="#4ab84a"/></linearGradient></defs><path d="M4 1.5 L12.5 8 L4 14.5Z" fill="url(#gpl)"/></svg>
<svg style="position:absolute;left:611px;top:279px" width="16" height="16" viewBox="0 0 16 16"><path d="M6.5 1 Q4.5 2.5 4.5 6.5" fill="none" stroke="#30a0e0" stroke-width="1.6"/><path d="M0.5 6 H8.5 L4.5 10.5Z" fill="#2a7ad0"/><path d="M11.5 8.5 Q11.5 12.5 9.5 14" fill="none" stroke="#1a4a9a" stroke-width="1.6"/><path d="M7.5 9 H15.5 L11.5 4.5Z" fill="#2a7ad0"/></svg>
<svg style="position:absolute;left:634px;top:279px" width="16" height="16" viewBox="0 0 16 16"><defs><linearGradient id="gx" x1="0" y1="0" x2="0" y2="1"><stop offset="0" stop-color="#f08080"/><stop offset="1" stop-color="#8a1010"/></linearGradient></defs><path d="M3 3 L13 13 M13 3 L3 13" stroke="url(#gx)" stroke-width="2"/></svg>
<svg style="position:absolute;left:655px;top:279px" width="16" height="16" viewBox="0 0 16 16"><path d="M3 8 V15.5 H13 V8 L8 3Z" fill="#f2f2f4" stroke="#8a8a98" stroke-width="0.8"/><path d="M0.8 8.5 L8 1.5 L15.2 8.5" fill="none" stroke="#2040c0" stroke-width="1.3"/><rect x="2" y="0" width="2" height="3.5" fill="#1a30b0"/><rect x="4.5" y="9" width="2.5" height="2.5" fill="#333"/><rect x="9" y="9" width="2.5" height="6" fill="#1a40a8"/></svg>
<div style="position:absolute;left:366px;top:300px;width:1173px;height:608px;background:#fff"></div>
<div style="position:absolute;left:366px;top:300px;width:1173px;height:1px;background:#9ea3b0"></div>
<div class="t" style="left:142px;width:600px;text-align:center;top:308px;font-size:12px;color:#000">Positionsn.</div>
<div class="t" style="left:339px;width:600px;text-align:center;top:308px;font-size:12px;color:#000">Kurztext der Position</div>
<div class="t" style="left:540px;width:600px;text-align:center;top:308px;font-size:12px;color:#000">LV Menge</div>
<div class="t" style="left:611px;width:600px;text-align:center;top:308px;font-size:12px;color:#000">EH</div>
<div class="t" style="left:676px;width:600px;text-align:center;top:308px;font-size:12px;color:#000">PKZ</div>
<div class="t" style="left:769px;width:600px;text-align:center;top:308px;font-size:12px;color:#000">Einheitspreis</div>
<div class="t" style="left:878px;width:600px;text-align:center;top:308px;font-size:12px;color:#000">Vergabe Nr.</div>
<div class="t" style="left:991px;width:600px;text-align:center;top:308px;font-size:12px;color:#000">Ist Menge</div>
<div class="t" style="left:1093px;width:600px;text-align:center;top:308px;font-size:12px;color:#000">Geprft. Menge</div>
<div class="t" style="left:1191px;width:600px;text-align:center;top:308px;font-size:12px;color:#000">Erw. Mengen</div>
<div style="position:absolute;left:373px;top:308px;width:13px;height:13px;border:1px solid #3c5a8a;background:linear-gradient(135deg,#d8d8d8,#fff)"></div>
<div style="position:absolute;left:394px;top:300px;width:1px;height:608px;background:#ececec"></div>
<div style="position:absolute;left:490px;top:300px;width:1px;height:608px;background:#ececec"></div>
<div style="position:absolute;left:789px;top:300px;width:1px;height:608px;background:#ececec"></div>
<div style="position:absolute;left:891px;top:300px;width:1px;height:608px;background:#ececec"></div>
<div style="position:absolute;left:931px;top:300px;width:1px;height:608px;background:#ececec"></div>
<div style="position:absolute;left:1021px;top:300px;width:1px;height:608px;background:#ececec"></div>
<div style="position:absolute;left:1117px;top:300px;width:1px;height:608px;background:#ececec"></div>
<div style="position:absolute;left:1240px;top:300px;width:1px;height:608px;background:#ececec"></div>
<div style="position:absolute;left:1342px;top:300px;width:1px;height:608px;background:#ececec"></div>
<div style="position:absolute;left:1444px;top:300px;width:1px;height:608px;background:#ececec"></div>
<div style="position:absolute;left:366px;top:458px;width:1173px;height:1px;background:#ececec"></div>
<div style="position:absolute;left:366px;top:477px;width:1173px;height:1px;background:#ececec"></div>
<div style="position:absolute;left:366px;top:496px;width:1173px;height:1px;background:#ececec"></div>
<div style="position:absolute;left:366px;top:515px;width:1173px;height:1px;background:#ececec"></div>
<div style="position:absolute;left:366px;top:534px;width:1173px;height:1px;background:#ececec"></div>
<div style="position:absolute;left:366px;top:553px;width:1173px;height:1px;background:#ececec"></div>
<div style="position:absolute;left:366px;top:572px;width:1173px;height:1px;background:#ececec"></div>
<div style="position:absolute;left:366px;top:591px;width:1173px;height:1px;background:#ececec"></div>
<div style="position:absolute;left:366px;top:610px;width:1173px;height:1px;background:#ececec"></div>
<div style="position:absolute;left:366px;top:629px;width:1173px;height:1px;background:#ececec"></div>
<div style="position:absolute;left:366px;top:648px;width:1173px;height:1px;background:#ececec"></div>
<div style="position:absolute;left:366px;top:667px;width:1173px;height:1px;background:#ececec"></div>
<div style="position:absolute;left:366px;top:686px;width:1173px;height:1px;background:#ececec"></div>
<div style="position:absolute;left:366px;top:705px;width:1173px;height:1px;background:#ececec"></div>
<div style="position:absolute;left:366px;top:724px;width:1173px;height:1px;background:#ececec"></div>
<div style="position:absolute;left:366px;top:743px;width:1173px;height:1px;background:#ececec"></div>
<div style="position:absolute;left:366px;top:762px;width:1173px;height:1px;background:#ececec"></div>
<div style="position:absolute;left:366px;top:781px;width:1173px;height:1px;background:#ececec"></div>
<div style="position:absolute;left:366px;top:800px;width:1173px;height:1px;background:#ececec"></div>
<div style="position:absolute;left:366px;top:819px;width:1173px;height:1px;background:#ececec"></div>
<div style="position:absolute;left:366px;top:838px;width:1173px;height:1px;background:#ececec"></div>
<div style="position:absolute;left:366px;top:857px;width:1173px;height:1px;background:#ececec"></div>
<div style="position:absolute;left:366px;top:876px;width:1173px;height:1px;background:#ececec"></div>
<div style="position:absolute;left:366px;top:895px;width:1173px;height:1px;background:#ececec"></div>
<div style="position:absolute;left:366px;top:914px;width:1173px;height:1px;background:#ececec"></div>
<div style="position:absolute;left:366px;top:326px;width:1173px;height:19px;background:#eef5fa"></div>
<div style="position:absolute;left:366px;top:344px;width:1173px;height:1px;background:#f4f4f4"></div>
<div style="position:absolute;left:394px;top:326px;width:1px;height:19px;background:#ececec"></div>
<div style="position:absolute;left:490px;top:326px;width:1px;height:19px;background:#ececec"></div>
<div style="position:absolute;left:789px;top:326px;width:1px;height:19px;background:#ececec"></div>
<div style="position:absolute;left:891px;top:326px;width:1px;height:19px;background:#ececec"></div>
<div style="position:absolute;left:931px;top:326px;width:1px;height:19px;background:#ececec"></div>
<div style="position:absolute;left:1021px;top:326px;width:1px;height:19px;background:#ececec"></div>
<div style="position:absolute;left:1117px;top:326px;width:1px;height:19px;background:#ececec"></div>
<div style="position:absolute;left:1240px;top:326px;width:1px;height:19px;background:#ececec"></div>
<div style="position:absolute;left:1342px;top:326px;width:1px;height:19px;background:#ececec"></div>
<div style="position:absolute;left:1444px;top:326px;width:1px;height:19px;background:#ececec"></div>
<div style="position:absolute;left:395px;top:326px;width:95px;height:18px;background:#c3daea"></div>
<div style="position:absolute;left:374px;top:329px;width:13px;height:13px;border:1px solid #3c5a8a;background:linear-gradient(135deg,#d0d0d0,#fff)"></div>
<div class="t" style="left:397px;top:330px;font-size:12px;color:#111;letter-spacing:-0.75px">46. &nbsp;. &nbsp;.</div>
<div style="position:absolute;left:491px;top:326px;width:15px;height:16px;border:1px solid #6a9acd;background:radial-gradient(circle at 45% 45%,#ffffff 20%,#d4e8f8 60%,#9cc8ee)"></div>
<svg style="position:absolute;left:494px;top:329px;" width="9" height="10" viewBox="0 0 9 10"><path d="M3.4 0.5 H5.6 V3.9 H9 V6.1 H5.6 V9.5 H3.4 V6.1 H0 V3.9 H3.4Z" fill="#000"/></svg>
<div style="position:absolute;left:1118px;top:326px;width:15px;height:16px;border:1px solid #6a9acd;background:radial-gradient(circle at 45% 45%,#ffffff 20%,#d4e8f8 60%,#9cc8ee)"></div>
<svg style="position:absolute;left:1121px;top:329px;" width="9" height="10" viewBox="0 0 9 10"><path d="M3.4 0.5 H5.6 V3.9 H9 V6.1 H5.6 V9.5 H3.4 V6.1 H0 V3.9 H3.4Z" fill="#000"/></svg>
<div class="t" style="left:1138px;top:330px;font-size:12px;color:#000;letter-spacing:-0.75px">4501-PRI</div>
<div style="position:absolute;left:366px;top:345px;width:1173px;height:19px;background:#e5eff7"></div>
<div style="position:absolute;left:366px;top:363px;width:1173px;height:1px;background:#f4f4f4"></div>
<div style="position:absolute;left:394px;top:345px;width:1px;height:19px;background:#ececec"></div>
<div style="position:absolute;left:490px;top:345px;width:1px;height:19px;background:#ececec"></div>
<div style="position:absolute;left:789px;top:345px;width:1px;height:19px;background:#ececec"></div>
<div style="position:absolute;left:891px;top:345px;width:1px;height:19px;background:#ececec"></div>
<div style="position:absolute;left:931px;top:345px;width:1px;height:19px;background:#ececec"></div>
<div style="position:absolute;left:1021px;top:345px;width:1px;height:19px;background:#ececec"></div>
<div style="position:absolute;left:1117px;top:345px;width:1px;height:19px;background:#ececec"></div>
<div style="position:absolute;left:1240px;top:345px;width:1px;height:19px;background:#ececec"></div>
<div style="position:absolute;left:1342px;top:345px;width:1px;height:19px;background:#ececec"></div>
<div style="position:absolute;left:1444px;top:345px;width:1px;height:19px;background:#ececec"></div>
<div style="position:absolute;left:395px;top:345px;width:95px;height:18px;background:#c3daea"></div>
<div style="position:absolute;left:374px;top:348px;width:13px;height:13px;border:1px solid #3c5a8a;background:linear-gradient(135deg,#d0d0d0,#fff)"></div>
<div class="t" style="left:397px;top:349px;font-size:12px;color:#111;letter-spacing:-0.75px">46.21. &nbsp;.</div>
<div style="position:absolute;left:491px;top:345px;width:15px;height:16px;border:1px solid #6a9acd;background:radial-gradient(circle at 45% 45%,#ffffff 20%,#d4e8f8 60%,#9cc8ee)"></div>
<svg style="position:absolute;left:494px;top:348px;" width="9" height="10" viewBox="0 0 9 10"><path d="M3.4 0.5 H5.6 V3.9 H9 V6.1 H5.6 V9.5 H3.4 V6.1 H0 V3.9 H3.4Z" fill="#000"/></svg>
<div class="t" style="left:511px;top:349px;font-size:12px;color:#22168a">Vorarbeiten</div>
<div style="position:absolute;left:1118px;top:345px;width:15px;height:16px;border:1px solid #6a9acd;background:radial-gradient(circle at 45% 45%,#ffffff 20%,#d4e8f8 60%,#9cc8ee)"></div>
<svg style="position:absolute;left:1121px;top:348px;" width="9" height="10" viewBox="0 0 9 10"><path d="M3.4 0.5 H5.6 V3.9 H9 V6.1 H5.6 V9.5 H3.4 V6.1 H0 V3.9 H3.4Z" fill="#000"/></svg>
<div class="t" style="left:1138px;top:349px;font-size:12px;color:#000;letter-spacing:-0.75px">4501-PRI</div>
<div style="position:absolute;left:366px;top:364px;width:1173px;height:19px;background:#eef5fa"></div>
<div style="position:absolute;left:366px;top:382px;width:1173px;height:1px;background:#f4f4f4"></div>
<div style="position:absolute;left:394px;top:364px;width:1px;height:19px;background:#ececec"></div>
<div style="position:absolute;left:490px;top:364px;width:1px;height:19px;background:#ececec"></div>
<div style="position:absolute;left:789px;top:364px;width:1px;height:19px;background:#ececec"></div>
<div style="position:absolute;left:891px;top:364px;width:1px;height:19px;background:#ececec"></div>
<div style="position:absolute;left:931px;top:364px;width:1px;height:19px;background:#ececec"></div>
<div style="position:absolute;left:1021px;top:364px;width:1px;height:19px;background:#ececec"></div>
<div style="position:absolute;left:1117px;top:364px;width:1px;height:19px;background:#ececec"></div>
<div style="position:absolute;left:1240px;top:364px;width:1px;height:19px;background:#ececec"></div>
<div style="position:absolute;left:1342px;top:364px;width:1px;height:19px;background:#ececec"></div>
<div style="position:absolute;left:1444px;top:364px;width:1px;height:19px;background:#ececec"></div>
<div style="position:absolute;left:395px;top:364px;width:95px;height:18px;background:#c3daea"></div>
<div style="position:absolute;left:374px;top:367px;width:13px;height:13px;border:1px solid #3c5a8a;background:linear-gradient(135deg,#d0d0d0,#fff)"></div>
<div class="t" style="left:397px;top:368px;font-size:12px;color:#111;letter-spacing:-0.75px">46.21.10.</div>
<div style="position:absolute;left:491px;top:364px;width:15px;height:16px;border:1px solid #6a9acd;background:radial-gradient(circle at 45% 45%,#ffffff 20%,#d4e8f8 60%,#9cc8ee)"></div>
<svg style="position:absolute;left:494px;top:367px;" width="9" height="10" viewBox="0 0 9 10"><path d="M3.4 0.5 H5.6 V3.9 H9 V6.1 H5.6 V9.5 H3.4 V6.1 H0 V3.9 H3.4Z" fill="#000"/></svg>
<div style="position:absolute;left:1118px;top:364px;width:15px;height:16px;border:1px solid #6a9acd;background:radial-gradient(circle at 45% 45%,#ffffff 20%,#d4e8f8 60%,#9cc8ee)"></div>
<svg style="position:absolute;left:1121px;top:367px;" width="9" height="10" viewBox="0 0 9 10"><path d="M3.4 0.5 H5.6 V3.9 H9 V6.1 H5.6 V9.5 H3.4 V6.1 H0 V3.9 H3.4Z" fill="#000"/></svg>
<div class="t" style="left:1138px;top:368px;font-size:12px;color:#000;letter-spacing:-0.75px">4501-PRI</div>
<div style="position:absolute;left:366px;top:383px;width:1173px;height:19px;background:#e5eff7"></div>
<div style="position:absolute;left:366px;top:401px;width:1173px;height:1px;background:#f4f4f4"></div>
<div style="position:absolute;left:394px;top:383px;width:1px;height:19px;background:#ececec"></div>
<div style="position:absolute;left:490px;top:383px;width:1px;height:19px;background:#ececec"></div>
<div style="position:absolute;left:789px;top:383px;width:1px;height:19px;background:#ececec"></div>
<div style="position:absolute;left:891px;top:383px;width:1px;height:19px;background:#ececec"></div>
<div style="position:absolute;left:931px;top:383px;width:1px;height:19px;background:#ececec"></div>
<div style="position:absolute;left:1021px;top:383px;width:1px;height:19px;background:#ececec"></div>
<div style="position:absolute;left:1117px;top:383px;width:1px;height:19px;background:#ececec"></div>
<div style="position:absolute;left:1240px;top:383px;width:1px;height:19px;background:#ececec"></div>
<div style="position:absolute;left:1342px;top:383px;width:1px;height:19px;background:#ececec"></div>
<div style="position:absolute;left:1444px;top:383px;width:1px;height:19px;background:#ececec"></div>
<div style="position:absolute;left:395px;top:383px;width:95px;height:18px;background:#c3daea"></div>
<div style="position:absolute;left:374px;top:386px;width:13px;height:13px;border:1px solid #3c5a8a;background:linear-gradient(135deg,#d0d0d0,#fff)"></div>
<div class="t" style="left:397px;top:387px;font-size:12px;color:#111;letter-spacing:-0.75px">46.21.10.E</div>
<div style="position:absolute;left:491px;top:383px;width:15px;height:16px;border:1px solid #6a9acd;background:radial-gradient(circle at 45% 45%,#ffffff 20%,#d4e8f8 60%,#9cc8ee)"></div>
<svg style="position:absolute;left:494px;top:386px;" width="9" height="10" viewBox="0 0 9 10"><path d="M3.4 0.5 H5.6 V3.9 H9 V6.1 H5.6 V9.5 H3.4 V6.1 H0 V3.9 H3.4Z" fill="#000"/></svg>
<div class="t" style="left:511px;top:387px;font-size:12px;color:#22168a">I-Abgescherte Leimfarbe entsorgen</div>
<div style="position:absolute;left:1118px;top:383px;width:15px;height:16px;border:1px solid #6a9acd;background:radial-gradient(circle at 45% 45%,#ffffff 20%,#d4e8f8 60%,#9cc8ee)"></div>
<svg style="position:absolute;left:1121px;top:386px;" width="9" height="10" viewBox="0 0 9 10"><path d="M3.4 0.5 H5.6 V3.9 H9 V6.1 H5.6 V9.5 H3.4 V6.1 H0 V3.9 H3.4Z" fill="#000"/></svg>
<div class="t" style="left:1138px;top:387px;font-size:12px;color:#000;letter-spacing:-0.75px">4501-PRI</div>
<div style="position:absolute;left:790px;top:383px;width:15px;height:16px;border:1px solid #6a9acd;background:#fff"></div>
<svg style="position:absolute;left:792px;top:385px;" width="11" height="12" viewBox="0 0 11 12"><defs><linearGradient id="gdc" x1="0" y1="0" x2="1" y2="1"><stop offset="0" stop-color="#ffffff"/><stop offset="1" stop-color="#b4c4ee"/></linearGradient></defs><path d="M1.5 0.5 H7.5 L10.5 3.5 V11.5 H1.5 Z" fill="url(#gdc)" stroke="#a0a8d0" stroke-width="1" stroke-linejoin="miter"/><path d="M7.5 0.5 L10.5 3.5" stroke="#5060a0" stroke-width="1"/></svg>
<div class="t" style="left:491px;width:400px;text-align:right;top:387px;font-size:12px;color:#000;letter-spacing:-0.75px">20,000</div>
<div class="t" style="left:895px;top:387px;font-size:12px;color:#22168a">m<sup style="font-size:8px;vertical-align:5px">2</sup></div>
<div style="position:absolute;left:932px;top:383px;width:15px;height:16px;border:1px solid #6a9acd;background:radial-gradient(circle at 45% 45%,#ffffff 20%,#d4e8f8 60%,#9cc8ee)"></div>
<svg style="position:absolute;left:935px;top:386px;" width="9" height="10" viewBox="0 0 9 10"><path d="M3.4 0.5 H5.6 V3.9 H9 V6.1 H5.6 V9.5 H3.4 V6.1 H0 V3.9 H3.4Z" fill="#000"/></svg>
<div class="t" style="left:717px;width:400px;text-align:right;top:387px;font-size:12px;color:#000;letter-spacing:-0.75px">24,00</div>
<div style="position:absolute;left:1241px;top:383px;width:15px;height:16px;border:1px solid #6a9acd;background:radial-gradient(circle at 45% 45%,#ffffff 20%,#d4e8f8 60%,#9cc8ee)"></div>
<svg style="position:absolute;left:1244px;top:386px;" width="9" height="10" viewBox="0 0 9 10"><path d="M3.4 0.5 H5.6 V3.9 H9 V6.1 H5.6 V9.5 H3.4 V6.1 H0 V3.9 H3.4Z" fill="#000"/></svg>
<div class="t" style="left:942px;width:400px;text-align:right;top:387px;font-size:12px;color:#22168a;letter-spacing:-0.75px">170,000</div>
<div style="position:absolute;left:1343px;top:383px;width:15px;height:16px;border:1px solid #6a9acd;background:#fff"></div>
<svg style="position:absolute;left:1345px;top:385px;" width="11" height="12" viewBox="0 0 11 12"><defs><linearGradient id="gdc" x1="0" y1="0" x2="1" y2="1"><stop offset="0" stop-color="#ffffff"/><stop offset="1" stop-color="#b4c4ee"/></linearGradient></defs><path d="M1.5 0.5 H7.5 L10.5 3.5 V11.5 H1.5 Z" fill="url(#gdc)" stroke="#a0a8d0" stroke-width="1" stroke-linejoin="miter"/><path d="M7.5 0.5 L10.5 3.5" stroke="#5060a0" stroke-width="1"/></svg>
<div class="t" style="left:1044px;width:400px;text-align:right;top:387px;font-size:12px;color:#000;letter-spacing:-0.75px">0,000</div>
<div style="position:absolute;left:1445px;top:383px;width:15px;height:16px;border:1px solid #6a9acd;background:#fff"></div>
<svg style="position:absolute;left:1447px;top:385px;" width="11" height="12" viewBox="0 0 11 12"><defs><linearGradient id="gdc" x1="0" y1="0" x2="1" y2="1"><stop offset="0" stop-color="#ffffff"/><stop offset="1" stop-color="#b4c4ee"/></linearGradient></defs><path d="M1.5 0.5 H7.5 L10.5 3.5 V11.5 H1.5 Z" fill="url(#gdc)" stroke="#a0a8d0" stroke-width="1" stroke-linejoin="miter"/><path d="M7.5 0.5 L10.5 3.5" stroke="#5060a0" stroke-width="1"/></svg>
<div class="t" style="left:1519px;top:387px;font-size:12px;color:#000;letter-spacing:-0.4px">0,00</div>
<div style="position:absolute;left:366px;top:402px;width:1173px;height:19px;background:#eef5fa"></div>
<div style="position:absolute;left:366px;top:420px;width:1173px;height:1px;background:#f4f4f4"></div>
<div style="position:absolute;left:394px;top:402px;width:1px;height:19px;background:#ececec"></div>
<div style="position:absolute;left:490px;top:402px;width:1px;height:19px;background:#ececec"></div>
<div style="position:absolute;left:789px;top:402px;width:1px;height:19px;background:#ececec"></div>
<div style="position:absolute;left:891px;top:402px;width:1px;height:19px;background:#ececec"></div>
<div style="position:absolute;left:931px;top:402px;width:1px;height:19px;background:#ececec"></div>
<div style="position:absolute;left:1021px;top:402px;width:1px;height:19px;background:#ececec"></div>
<div style="position:absolute;left:1117px;top:402px;width:1px;height:19px;background:#ececec"></div>
<div style="position:absolute;left:1240px;top:402px;width:1px;height:19px;background:#ececec"></div>
<div style="position:absolute;left:1342px;top:402px;width:1px;height:19px;background:#ececec"></div>
<div style="position:absolute;left:1444px;top:402px;width:1px;height:19px;background:#ececec"></div>
<div style="position:absolute;left:395px;top:402px;width:95px;height:18px;background:#c3daea"></div>
<div style="position:absolute;left:374px;top:405px;width:13px;height:13px;border:1px solid #3c5a8a;background:linear-gradient(135deg,#d0d0d0,#fff)"></div>
<div class="t" style="left:397px;top:406px;font-size:12px;color:#111;letter-spacing:-0.75px">46.21.11.</div>
<div style="position:absolute;left:491px;top:402px;width:15px;height:16px;border:1px solid #6a9acd;background:radial-gradient(circle at 45% 45%,#ffffff 20%,#d4e8f8 60%,#9cc8ee)"></div>
<svg style="position:absolute;left:494px;top:405px;" width="9" height="10" viewBox="0 0 9 10"><path d="M3.4 0.5 H5.6 V3.9 H9 V6.1 H5.6 V9.5 H3.4 V6.1 H0 V3.9 H3.4Z" fill="#000"/></svg>
<div style="position:absolute;left:1118px;top:402px;width:15px;height:16px;border:1px solid #6a9acd;background:radial-gradient(circle at 45% 45%,#ffffff 20%,#d4e8f8 60%,#9cc8ee)"></div>
<svg style="position:absolute;left:1121px;top:405px;" width="9" height="10" viewBox="0 0 9 10"><path d="M3.4 0.5 H5.6 V3.9 H9 V6.1 H5.6 V9.5 H3.4 V6.1 H0 V3.9 H3.4Z" fill="#000"/></svg>
<div class="t" style="left:1138px;top:406px;font-size:12px;color:#000;letter-spacing:-0.75px">4501-PRI</div>
<div style="position:absolute;left:366px;top:421px;width:1173px;height:19px;background:#e5eff7"></div>
<div style="position:absolute;left:366px;top:439px;width:1173px;height:1px;background:#f4f4f4"></div>
<div style="position:absolute;left:394px;top:421px;width:1px;height:19px;background:#ececec"></div>
<div style="position:absolute;left:490px;top:421px;width:1px;height:19px;background:#ececec"></div>
<div style="position:absolute;left:789px;top:421px;width:1px;height:19px;background:#ececec"></div>
<div style="position:absolute;left:891px;top:421px;width:1px;height:19px;background:#ececec"></div>
<div style="position:absolute;left:931px;top:421px;width:1px;height:19px;background:#ececec"></div>
<div style="position:absolute;left:1021px;top:421px;width:1px;height:19px;background:#ececec"></div>
<div style="position:absolute;left:1117px;top:421px;width:1px;height:19px;background:#ececec"></div>
<div style="position:absolute;left:1240px;top:421px;width:1px;height:19px;background:#ececec"></div>
<div style="position:absolute;left:1342px;top:421px;width:1px;height:19px;background:#ececec"></div>
<div style="position:absolute;left:1444px;top:421px;width:1px;height:19px;background:#ececec"></div>
<div style="position:absolute;left:395px;top:421px;width:95px;height:18px;background:#c3daea"></div>
<div style="position:absolute;left:374px;top:424px;width:13px;height:13px;border:1px solid #3c5a8a;background:linear-gradient(135deg,#d0d0d0,#fff)"></div>
<div class="t" style="left:397px;top:425px;font-size:12px;color:#111;letter-spacing:-0.75px">46.21.11.E</div>
<div style="position:absolute;left:491px;top:421px;width:15px;height:16px;border:1px solid #6a9acd;background:radial-gradient(circle at 45% 45%,#ffffff 20%,#d4e8f8 60%,#9cc8ee)"></div>
<svg style="position:absolute;left:494px;top:424px;" width="9" height="10" viewBox="0 0 9 10"><path d="M3.4 0.5 H5.6 V3.9 H9 V6.1 H5.6 V9.5 H3.4 V6.1 H0 V3.9 H3.4Z" fill="#000"/></svg>
<div class="t" style="left:511px;top:425px;font-size:12px;color:#22168a">I-Abgescherte Kalkfarbe entsorgen</div>
<div style="position:absolute;left:1118px;top:421px;width:15px;height:16px;border:1px solid #6a9acd;background:radial-gradient(circle at 45% 45%,#ffffff 20%,#d4e8f8 60%,#9cc8ee)"></div>
<svg style="position:absolute;left:1121px;top:424px;" width="9" height="10" viewBox="0 0 9 10"><path d="M3.4 0.5 H5.6 V3.9 H9 V6.1 H5.6 V9.5 H3.4 V6.1 H0 V3.9 H3.4Z" fill="#000"/></svg>
<div class="t" style="left:1138px;top:425px;font-size:12px;color:#000;letter-spacing:-0.75px">4501-PRI</div>
<div style="position:absolute;left:790px;top:421px;width:15px;height:16px;border:1px solid #6a9acd;background:#fff"></div>
<svg style="position:absolute;left:792px;top:423px;" width="11" height="12" viewBox="0 0 11 12"><defs><linearGradient id="gdc" x1="0" y1="0" x2="1" y2="1"><stop offset="0" stop-color="#ffffff"/><stop offset="1" stop-color="#b4c4ee"/></linearGradient></defs><path d="M1.5 0.5 H7.5 L10.5 3.5 V11.5 H1.5 Z" fill="url(#gdc)" stroke="#a0a8d0" stroke-width="1" stroke-linejoin="miter"/><path d="M7.5 0.5 L10.5 3.5" stroke="#5060a0" stroke-width="1"/></svg>
<div class="t" style="left:491px;width:400px;text-align:right;top:425px;font-size:12px;color:#000;letter-spacing:-0.75px">30,000</div>
<div class="t" style="left:895px;top:425px;font-size:12px;color:#22168a">m<sup style="font-size:8px;vertical-align:5px">2</sup></div>
<div style="position:absolute;left:932px;top:421px;width:15px;height:16px;border:1px solid #6a9acd;background:radial-gradient(circle at 45% 45%,#ffffff 20%,#d4e8f8 60%,#9cc8ee)"></div>
<svg style="position:absolute;left:935px;top:424px;" width="9" height="10" viewBox="0 0 9 10"><path d="M3.4 0.5 H5.6 V3.9 H9 V6.1 H5.6 V9.5 H3.4 V6.1 H0 V3.9 H3.4Z" fill="#000"/></svg>
<div class="t" style="left:717px;width:400px;text-align:right;top:425px;font-size:12px;color:#000;letter-spacing:-0.75px">4,00</div>
<div style="position:absolute;left:1241px;top:421px;width:15px;height:16px;border:1px solid #6a9acd;background:radial-gradient(circle at 45% 45%,#ffffff 20%,#d4e8f8 60%,#9cc8ee)"></div>
<svg style="position:absolute;left:1244px;top:424px;" width="9" height="10" viewBox="0 0 9 10"><path d="M3.4 0.5 H5.6 V3.9 H9 V6.1 H5.6 V9.5 H3.4 V6.1 H0 V3.9 H3.4Z" fill="#000"/></svg>
<div class="t" style="left:942px;width:400px;text-align:right;top:425px;font-size:12px;color:#22168a;letter-spacing:-0.75px">280,000</div>
<div style="position:absolute;left:1343px;top:421px;width:15px;height:16px;border:1px solid #6a9acd;background:#fff"></div>
<svg style="position:absolute;left:1345px;top:423px;" width="11" height="12" viewBox="0 0 11 12"><defs><linearGradient id="gdc" x1="0" y1="0" x2="1" y2="1"><stop offset="0" stop-color="#ffffff"/><stop offset="1" stop-color="#b4c4ee"/></linearGradient></defs><path d="M1.5 0.5 H7.5 L10.5 3.5 V11.5 H1.5 Z" fill="url(#gdc)" stroke="#a0a8d0" stroke-width="1" stroke-linejoin="miter"/><path d="M7.5 0.5 L10.5 3.5" stroke="#5060a0" stroke-width="1"/></svg>
<div class="t" style="left:1044px;width:400px;text-align:right;top:425px;font-size:12px;color:#000;letter-spacing:-0.75px">0,000</div>
<div style="position:absolute;left:1445px;top:421px;width:15px;height:16px;border:1px solid #6a9acd;background:#fff"></div>
<svg style="position:absolute;left:1447px;top:423px;" width="11" height="12" viewBox="0 0 11 12"><defs><linearGradient id="gdc" x1="0" y1="0" x2="1" y2="1"><stop offset="0" stop-color="#ffffff"/><stop offset="1" stop-color="#b4c4ee"/></linearGradient></defs><path d="M1.5 0.5 H7.5 L10.5 3.5 V11.5 H1.5 Z" fill="url(#gdc)" stroke="#a0a8d0" stroke-width="1" stroke-linejoin="miter"/><path d="M7.5 0.5 L10.5 3.5" stroke="#5060a0" stroke-width="1"/></svg>
<div class="t" style="left:1519px;top:425px;font-size:12px;color:#000;letter-spacing:-0.4px">0,00</div>
<div style="position:absolute;left:1253px;top:301px;width:83px;height:27px;border:5px solid #ed1c24"></div>
<div style="position:absolute;left:1287px;top:365px;width:93px;height:94px;border:5px solid #ed1c24"></div>
<div style="position:absolute;left:366px;top:908px;width:1173px;height:17px;background:#f0f0f0"></div>
<div style="position:absolute;left:381px;top:909px;width:275px;height:14px;background:#cdcdcd"></div>
<svg style="position:absolute;left:369px;top:911px;" width="8" height="10" viewBox="0 0 8 10"><path d="M6 1 L2 5 L6 9" fill="none" stroke="#555" stroke-width="1.6"/></svg>
<svg style="position:absolute;left:1526px;top:911px;" width="8" height="10" viewBox="0 0 8 10"><path d="M2 1 L6 5 L2 9" fill="none" stroke="#555" stroke-width="1.6"/></svg>
<div style="position:absolute;left:366px;top:925px;width:1173px;height:20px;background:linear-gradient(#dfe4ee,#cfd6e4 60%,#c2cadb);border-top:2px solid #6f7b90"></div>
<div class="t" style="left:371px;top:933px;font-size:11px;color:#1a1a7a;letter-spacing:0.1px">VALERIO Geniale ArchitekturSoftware</div>
<div style="position:absolute;left:1291px;top:926px;width:1px;height:19px;background:#9aa2b4"></div>
<div style="position:absolute;left:1298px;top:930px;width:70px;height:15px;background:linear-gradient(#fbfcfe,#e4e8f2 60%,#d4dae6);border:1px solid #b8c0d0;border-bottom:none;border-radius:3px 3px 0 0"></div>
<svg style="position:absolute;left:1305px;top:931px;" width="9" height="14" viewBox="0 0 9 14"><path d="M0 0 L9 7 L0 14Z" fill="#a8a8b0"/></svg>
<div style="position:absolute;left:1327px;top:931px;width:4px;height:14px;background:#a8a8b0"></div>
<div style="position:absolute;left:1335px;top:931px;width:4px;height:14px;background:#a8a8b0"></div>
<div style="position:absolute;left:1350px;top:931px;width:14px;height:14px;background:linear-gradient(#c0c0c8,#909098)"></div>
<div style="position:absolute;left:1376px;top:935px;width:138px;height:8px;border:1px solid #8a96b2;border-radius:2px;background:#e4e9f4"></div>
<div style="position:absolute;left:361px;top:115px;width:1183px;height:835px;border:5px solid #ed1c24"></div>
</body></html>
